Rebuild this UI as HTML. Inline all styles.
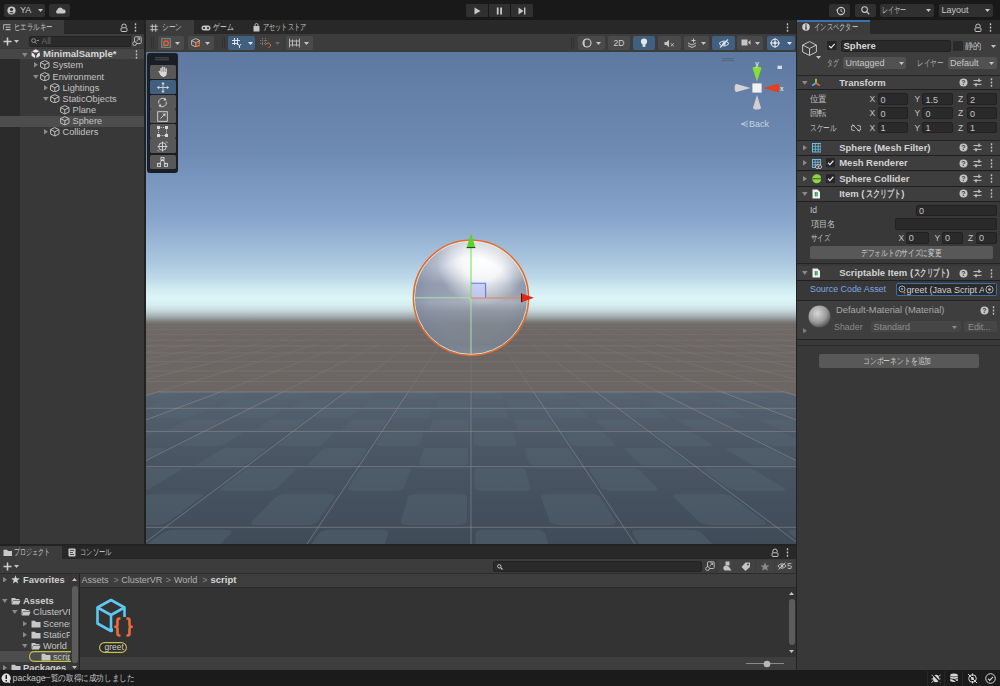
<!DOCTYPE html><html><head><meta charset="utf-8"><title>Unity</title><style>
*{box-sizing:border-box}
html,body{margin:0;padding:0;width:1000px;height:686px;overflow:hidden;background:#191919}
.a{position:absolute;display:block}
.jp{transform-origin:0 50%}
.t{font-family:"Liberation Sans",sans-serif;line-height:12px;white-space:nowrap}
</style></head><body><div class="a" style="left:0px;top:0px;width:1000px;height:20px;background:#191919;"></div>
<div class="a" style="left:0px;top:20px;width:1000px;height:650px;background:#222222;"></div>
<div class="a" style="left:4px;top:4px;width:41px;height:12.5px;background:#303030;border-radius:2px"></div>
<svg class="a" style="left:7px;top:5.5px;" width="9" height="9" viewBox="0 0 9 9"><circle cx="4.5" cy="4.5" r="4.1" fill="#c8c8c8"/><circle cx="4.5" cy="3.5" r="1.6" fill="#303030"/><path d="M1.8,7.3 Q4.5,4.6 7.2,7.3" fill="#303030"/></svg>
<div class="a t" style="left:20px;top:4.30px;font-size:9px;color:#c8c8c8;">YA</div>
<svg class="a" style="left:38px;top:9px;" width="5" height="3" viewBox="0 0 5 3"><polygon points="0,0 5,0 2.5,3" fill="#c8c8c8"/></svg>
<div class="a" style="left:49px;top:4px;width:21px;height:12.5px;background:#303030;border-radius:2px"></div>
<svg class="a" style="left:54.5px;top:6.5px;" width="11" height="7" viewBox="0 0 11 7"><path d="M2,6.5 A2,2 0 0 1 2.2,3 A3,3 0 0 1 8,2.6 A2,2 0 0 1 9.2,6.5 Z" fill="#c8c8c8"/></svg>
<div class="a" style="left:466px;top:4px;width:21.5px;height:12.5px;background:#303030;border-radius:1px"></div>
<div class="a" style="left:488.5px;top:4px;width:21.5px;height:12.5px;background:#303030;border-radius:1px"></div>
<div class="a" style="left:511px;top:4px;width:21.5px;height:12.5px;background:#303030;border-radius:1px"></div>
<svg class="a" style="left:473.5px;top:6.5px;" width="7" height="8" viewBox="0 0 7 8"><polygon points="0.5,0.5 6.5,4 0.5,7.5" fill="#c8c8c8"/></svg>
<svg class="a" style="left:496px;top:6.5px;" width="7" height="8" viewBox="0 0 7 8"><rect x="0.8" y="0.5" width="1.8" height="7" fill="#c8c8c8"/><rect x="4.2" y="0.5" width="1.8" height="7" fill="#c8c8c8"/></svg>
<svg class="a" style="left:518px;top:6.5px;" width="8" height="8" viewBox="0 0 8 8"><polygon points="0.5,0.5 5.5,4 0.5,7.5" fill="#c8c8c8"/><rect x="6" y="0.5" width="1.4" height="7" fill="#c8c8c8"/></svg>
<div class="a" style="left:829px;top:4px;width:21px;height:12.5px;background:#303030;border-radius:2px"></div>
<svg class="a" style="left:835.5px;top:5.5px;" width="10" height="10" viewBox="0 0 10 10"><circle cx="5" cy="5" r="3.6" fill="none" stroke="#c8c8c8" stroke-width="1.1"/><path d="M5,3 V5.2 L6.5,6.2" fill="none" stroke="#c8c8c8" stroke-width="0.9"/><polygon points="0,3.5 2.5,3.5 1.2,5.6" fill="#c8c8c8"/></svg>
<div class="a" style="left:854.5px;top:4px;width:21px;height:12.5px;background:#303030;border-radius:2px"></div>
<svg class="a" style="left:860.5px;top:6px;" width="9" height="9" viewBox="0 0 9 9"><circle cx="3.6" cy="3.6" r="2.8" fill="none" stroke="#c8c8c8" stroke-width="1.1"/><path d="M5.6,5.6 L8.3,8.3" stroke="#c8c8c8" stroke-width="1.3"/></svg>
<div class="a" style="left:880px;top:4px;width:54px;height:12.5px;background:#303030;border-radius:2px"></div>
<div class="a t jp" data-w="24.5" id="jp0" style="left:881.6px;top:4.30px;font-size:9.35px;color:#b8b8b8;transform:scaleX(0.6806)">レイヤー</div>
<svg class="a" style="left:926px;top:9px;" width="5" height="3" viewBox="0 0 5 3"><polygon points="0,0 5,0 2.5,3" fill="#c8c8c8"/></svg>
<div class="a" style="left:939px;top:4px;width:54px;height:12.5px;background:#303030;border-radius:2px"></div>
<div class="a t" style="left:941.5px;top:4.30px;font-size:9px;color:#c8c8c8;">Layout</div>
<svg class="a" style="left:985px;top:9px;" width="5" height="3" viewBox="0 0 5 3"><polygon points="0,0 5,0 2.5,3" fill="#c8c8c8"/></svg>
<div class="a" style="left:0px;top:20px;width:144px;height:14px;background:#282828;"></div>
<div class="a" style="left:0px;top:20px;width:64px;height:14px;background:#3c3c3c;"></div>
<svg class="a" style="left:3px;top:23.5px;" width="8" height="7" viewBox="0 0 8 7"><path d="M0.5,0.8 H7.5 M2.5,3.2 H7.5 M2.5,5.6 H7.5" stroke="#bdbdbd" stroke-width="1.1"/><path d="M0.5,0.8 V5.6" stroke="#bdbdbd" stroke-width="0.8"/></svg>
<div class="a t jp" data-w="38.5" id="jp1" style="left:13.5px;top:21.20px;font-size:9.35px;color:#c4c4c4;transform:scaleX(0.7130)">ヒエラルキー</div>
<svg class="a" style="left:119.5px;top:22.5px;" width="8" height="9" viewBox="0 0 8 9"><path d="M1.8,4.5 V3.2 A2.2,2.2 0 0 1 6.2,3.2 V4.2" fill="none" stroke="#c4c4c4" stroke-width="1"/><rect x="1" y="4.8" width="6" height="3.7" rx="1" fill="none" stroke="#c4c4c4" stroke-width="1"/></svg>
<svg class="a" style="left:133.5px;top:22.5px;" width="3" height="9" viewBox="0 0 3 9"><rect x="0.8" y="0.3" width="1.4" height="1.9" fill="#c4c4c4"/><rect x="0.8" y="3.55" width="1.4" height="1.9" fill="#c4c4c4"/><rect x="0.8" y="6.8" width="1.4" height="1.9" fill="#c4c4c4"/></svg>
<div class="a" style="left:0px;top:34px;width:144px;height:14px;background:#3c3c3c;"></div>
<svg class="a" style="left:2.5px;top:36.5px;" width="9" height="9" viewBox="0 0 9 9"><path d="M4.5,0.5 V8.5 M0.5,4.5 H8.5" stroke="#d0d0d0" stroke-width="1.5"/></svg>
<svg class="a" style="left:14px;top:39.8px;" width="5" height="3" viewBox="0 0 5 3"><polygon points="0,0 5,0 2.5,3" fill="#c4c4c4"/></svg>
<div class="a" style="left:28.5px;top:35.5px;width:102px;height:11px;background:#2a2a2a;border-radius:2px 0 0 2px;border:1px solid #232323"></div>
<svg class="a" style="left:31px;top:37.8px;" width="9" height="7" viewBox="0 0 9 7"><circle cx="2.6" cy="2.6" r="1.9" fill="none" stroke="#9a9a9a" stroke-width="0.9"/><path d="M3.8,3.9 L5.6,5.8 M5.5,2.6 H8" stroke="#9a9a9a" stroke-width="0.9"/></svg>
<div class="a t" style="left:41.5px;top:35.20px;font-size:8.5px;color:#6a6a6a;">All</div>
<svg class="a" style="left:131.5px;top:36.2px;" width="10" height="10" viewBox="0 0 10 10"><rect x="2.5" y="0.8" width="6.7" height="6.7" rx="0.8" fill="none" stroke="#c4c4c4" stroke-width="0.9"/><path d="M4.5,5.2 L7.5,2.2 M5.5,2 H7.6 V4" stroke="#c4c4c4" stroke-width="0.9" fill="none"/><circle cx="2.6" cy="7.6" r="1.9" fill="#3c3c3c" stroke="#c4c4c4" stroke-width="0.9"/></svg>
<div class="a" style="left:0px;top:48px;width:144px;height:496px;background:#383838;"></div>
<div class="a" style="left:0px;top:59px;width:19.5px;height:485px;background:#2b2b2b;"></div>
<div class="a" style="left:0px;top:48.5px;width:144px;height:10.8px;background:#464646;"></div>
<svg class="a" style="left:22px;top:52.5px;" width="5.5" height="4" viewBox="0 0 5.5 4"><polygon points="0,0 5.5,0 2.75,4" fill="#8a8a8a"/></svg>
<svg class="a" style="left:30.5px;top:49.3px;" width="9.5" height="9.5" viewBox="0 0 9.5 9.5"><path d="M4.75,0.3 L8.9,2.6 V7 L4.75,9.2 L0.6,7 V2.6 Z" fill="#e8e8e8"/><path d="M4.75,4.9 V9.2 M4.75,4.9 L0.6,2.6 M4.75,4.9 L8.9,2.6" stroke="#464646" stroke-width="1.3"/><circle cx="4.75" cy="4.9" r="1.5" fill="#464646"/></svg>
<div class="a t" style="left:43px;top:48.20px;font-size:9.6px;color:#d6d6d6;font-weight:bold;">MinimalSample*</div>
<svg class="a" style="left:134.5px;top:49.8px;" width="3" height="9" viewBox="0 0 3 9"><rect x="0.8" y="0.3" width="1.4" height="1.9" fill="#c4c4c4"/><rect x="0.8" y="3.55" width="1.4" height="1.9" fill="#c4c4c4"/><rect x="0.8" y="6.8" width="1.4" height="1.9" fill="#c4c4c4"/></svg>
<div class="a" style="left:0px;top:115.8px;width:144px;height:11px;background:#4d4d4d;"></div>
<svg class="a" style="left:34px;top:62.400000000000006px;" width="4" height="5.6" viewBox="0 0 4 5.6"><polygon points="0,0 4,2.8 0,5.6" fill="#8a8a8a"/></svg>
<svg class="a" style="left:40px;top:60.400000000000006px;" width="9.6" height="9.6" viewBox="0 0 9.6 9.6"><path d="M4.8,0.6 L9.0,2.592 L9.0,7.008 L4.8,9.0 L0.6,7.008 L0.6,2.592 Z M0.6,2.592 L4.8,4.8 L9.0,2.592 M4.8,4.8 L4.8,9.0" fill="none" stroke="#c4c4c4" stroke-width="0.95" stroke-linejoin="round"/></svg>
<div class="a t" style="left:52.5px;top:59.40px;font-size:9.2px;color:#c4c4c4;">System</div>
<svg class="a" style="left:33px;top:74.5px;" width="5.6" height="4" viewBox="0 0 5.6 4"><polygon points="0,0 5.6,0 2.8,4" fill="#8a8a8a"/></svg>
<svg class="a" style="left:40px;top:71.5px;" width="9.6" height="9.6" viewBox="0 0 9.6 9.6"><path d="M4.8,0.6 L9.0,2.592 L9.0,7.008 L4.8,9.0 L0.6,7.008 L0.6,2.592 Z M0.6,2.592 L4.8,4.8 L9.0,2.592 M4.8,4.8 L4.8,9.0" fill="none" stroke="#c4c4c4" stroke-width="0.95" stroke-linejoin="round"/></svg>
<div class="a t" style="left:52.5px;top:70.50px;font-size:9.2px;color:#c4c4c4;">Environment</div>
<svg class="a" style="left:44px;top:84.7px;" width="4" height="5.6" viewBox="0 0 4 5.6"><polygon points="0,0 4,2.8 0,5.6" fill="#8a8a8a"/></svg>
<svg class="a" style="left:50px;top:82.7px;" width="9.6" height="9.6" viewBox="0 0 9.6 9.6"><path d="M4.8,0.6 L9.0,2.592 L9.0,7.008 L4.8,9.0 L0.6,7.008 L0.6,2.592 Z M0.6,2.592 L4.8,4.8 L9.0,2.592 M4.8,4.8 L4.8,9.0" fill="none" stroke="#c4c4c4" stroke-width="0.95" stroke-linejoin="round"/></svg>
<div class="a t" style="left:62.5px;top:81.70px;font-size:9.2px;color:#c4c4c4;">Lightings</div>
<svg class="a" style="left:43px;top:96.8px;" width="5.6" height="4" viewBox="0 0 5.6 4"><polygon points="0,0 5.6,0 2.8,4" fill="#8a8a8a"/></svg>
<svg class="a" style="left:50px;top:93.8px;" width="9.6" height="9.6" viewBox="0 0 9.6 9.6"><path d="M4.8,0.6 L9.0,2.592 L9.0,7.008 L4.8,9.0 L0.6,7.008 L0.6,2.592 Z M0.6,2.592 L4.8,4.8 L9.0,2.592 M4.8,4.8 L4.8,9.0" fill="none" stroke="#c4c4c4" stroke-width="0.95" stroke-linejoin="round"/></svg>
<div class="a t" style="left:62.5px;top:92.80px;font-size:9.2px;color:#c4c4c4;">StaticObjects</div>
<svg class="a" style="left:60px;top:105.0px;" width="9.6" height="9.6" viewBox="0 0 9.6 9.6"><path d="M4.8,0.6 L9.0,2.592 L9.0,7.008 L4.8,9.0 L0.6,7.008 L0.6,2.592 Z M0.6,2.592 L4.8,4.8 L9.0,2.592 M4.8,4.8 L4.8,9.0" fill="none" stroke="#c4c4c4" stroke-width="0.95" stroke-linejoin="round"/></svg>
<div class="a t" style="left:72.5px;top:104.00px;font-size:9.2px;color:#c4c4c4;">Plane</div>
<svg class="a" style="left:60px;top:116.2px;" width="9.6" height="9.6" viewBox="0 0 9.6 9.6"><path d="M4.8,0.6 L9.0,2.592 L9.0,7.008 L4.8,9.0 L0.6,7.008 L0.6,2.592 Z M0.6,2.592 L4.8,4.8 L9.0,2.592 M4.8,4.8 L4.8,9.0" fill="none" stroke="#c4c4c4" stroke-width="0.95" stroke-linejoin="round"/></svg>
<div class="a t" style="left:72.5px;top:115.20px;font-size:9.2px;color:#c4c4c4;">Sphere</div>
<svg class="a" style="left:44px;top:129.29999999999998px;" width="4" height="5.6" viewBox="0 0 4 5.6"><polygon points="0,0 4,2.8 0,5.6" fill="#8a8a8a"/></svg>
<svg class="a" style="left:50px;top:127.3px;" width="9.6" height="9.6" viewBox="0 0 9.6 9.6"><path d="M4.8,0.6 L9.0,2.592 L9.0,7.008 L4.8,9.0 L0.6,7.008 L0.6,2.592 Z M0.6,2.592 L4.8,4.8 L9.0,2.592 M4.8,4.8 L4.8,9.0" fill="none" stroke="#c4c4c4" stroke-width="0.95" stroke-linejoin="round"/></svg>
<div class="a t" style="left:62.5px;top:126.30px;font-size:9.2px;color:#c4c4c4;">Colliders</div>
<div class="a" style="left:146px;top:20px;width:650px;height:14px;background:#282828;"></div>
<div class="a" style="left:146px;top:20px;width:48px;height:14px;background:#3c3c3c;"></div>
<svg class="a" style="left:150px;top:23.5px;" width="8" height="8" viewBox="0 0 8 8"><path d="M2.3,0.3 V7.7 M5.7,0.3 V7.7 M0.3,2.3 H7.7 M0.3,5.7 H7.7" stroke="#c4c4c4" stroke-width="1"/></svg>
<div class="a t jp" data-w="20.2" id="jp2" style="left:162.4px;top:21.20px;font-size:9.35px;color:#c4c4c4;transform:scaleX(0.7481)">シーン</div>
<svg class="a" style="left:201px;top:24.5px;" width="10" height="6" viewBox="0 0 10 6"><rect x="0.5" y="0.5" width="9" height="5" rx="2.5" fill="#c4c4c4"/><circle cx="3" cy="3" r="1.1" fill="#282828"/><circle cx="7" cy="3" r="1.1" fill="#282828"/></svg>
<div class="a t jp" data-w="20.4" id="jp3" style="left:213px;top:21.20px;font-size:9.35px;color:#c4c4c4;transform:scaleX(0.7556)">ゲーム</div>
<svg class="a" style="left:252.5px;top:22.8px;" width="7" height="9" viewBox="0 0 7 9"><path d="M2,3 V2 A1.5,1.5 0 0 1 5,2 V3" fill="none" stroke="#c4c4c4" stroke-width="0.9"/><rect x="0.5" y="3" width="6" height="5.5" rx="0.6" fill="#c4c4c4"/></svg>
<div class="a t jp" data-w="43" id="jp4" style="left:262.6px;top:21.20px;font-size:9.35px;color:#c4c4c4;transform:scaleX(0.6825)">アセットストア</div>
<svg class="a" style="left:785.5px;top:22.5px;" width="3" height="9" viewBox="0 0 3 9"><rect x="0.8" y="0.3" width="1.4" height="1.9" fill="#c4c4c4"/><rect x="0.8" y="3.55" width="1.4" height="1.9" fill="#c4c4c4"/><rect x="0.8" y="6.8" width="1.4" height="1.9" fill="#c4c4c4"/></svg>
<div class="a" style="left:146px;top:34px;width:650px;height:17.5px;background:#3c3c3c;"></div>
<svg class="a" style="left:151px;top:37px;" width="3" height="12" viewBox="0 0 3 12"><path d="M0.5,0 V12 M2.5,0 V12" stroke="#2e2e2e" stroke-width="0.8"/></svg>
<svg class="a" style="left:221.5px;top:37px;" width="3" height="12" viewBox="0 0 3 12"><path d="M0.5,0 V12 M2.5,0 V12" stroke="#2e2e2e" stroke-width="0.8"/></svg>
<svg class="a" style="left:570.5px;top:37px;" width="3" height="12" viewBox="0 0 3 12"><path d="M0.5,0 V12 M2.5,0 V12" stroke="#2e2e2e" stroke-width="0.8"/></svg>
<div class="a" style="left:157.5px;top:35.8px;width:26.5px;height:13.8px;background:#4a4a4a;border-radius:2px"></div>
<svg class="a" style="left:160.5px;top:37.6px;" width="10" height="10" viewBox="0 0 10 10"><rect x="0.6" y="0.6" width="8.8" height="8.8" fill="#5a5a5a" stroke="#8a8a8a" stroke-width="0.8"/><circle cx="5" cy="5.2" r="2.3" fill="none" stroke="#f06020" stroke-width="1.1"/><path d="M1.5,8.5 L3,7" stroke="#4a8ae0" stroke-width="0.8"/></svg>
<svg class="a" style="left:174.5px;top:41.5px;" width="5" height="3" viewBox="0 0 5 3"><polygon points="0,0 5,0 2.5,3" fill="#c4c4c4"/></svg>
<div class="a" style="left:187.5px;top:35.8px;width:26.5px;height:13.8px;background:#4a4a4a;border-radius:2px"></div>
<svg class="a" style="left:190.5px;top:37.5px;" width="9.5" height="9.5" viewBox="0 0 9.5 9.5"><path d="M4.75,0.6 L8.9,2.5650000000000004 L8.9,6.935 L4.75,8.9 L0.6,6.935 L0.6,2.5650000000000004 Z M0.6,2.5650000000000004 L4.75,4.75 L8.9,2.5650000000000004 M4.75,4.75 L4.75,8.9" fill="none" stroke="#c4c4c4" stroke-width="0.9" stroke-linejoin="round"/></svg>
<svg class="a" style="left:195px;top:42px;" width="5" height="5" viewBox="0 0 5 5"><circle cx="2.5" cy="2.5" r="1.8" fill="none" stroke="#f06020" stroke-width="1.1"/></svg>
<svg class="a" style="left:204.5px;top:41.5px;" width="5" height="3" viewBox="0 0 5 3"><polygon points="0,0 5,0 2.5,3" fill="#c4c4c4"/></svg>
<div class="a" style="left:228px;top:35.8px;width:16.5px;height:13.8px;background:#41607f;border-radius:2px 0 0 2px"></div>
<div class="a" style="left:245px;top:35.8px;width:9.5px;height:13.8px;background:#41607f;border-radius:0 2px 2px 0"></div>
<svg class="a" style="left:231.5px;top:38px;" width="10" height="10" viewBox="0 0 10 10"><path d="M2.5,0 V7 M5.5,0 V7 M0,2.5 H8 M0,5.5 H6" stroke="#dce4ee" stroke-width="1"/><path d="M6,6 L7.5,8 L9,6 M7.5,8 V10" stroke="#dce4ee" stroke-width="1" fill="none"/></svg>
<svg class="a" style="left:247.5px;top:41.5px;" width="5" height="3" viewBox="0 0 5 3"><polygon points="0,0 5,0 2.5,3" fill="#dce4ee"/></svg>
<div class="a" style="left:256.8px;top:35.8px;width:26.6px;height:13.8px;background:#3f3f3f;border-radius:2px"></div>
<svg class="a" style="left:260px;top:38px;" width="11" height="10" viewBox="0 0 11 10"><path d="M2.5,0 V8 M5.5,0 V8 M0,2.5 H8 M0,5.5 H8" stroke="#7a7a7a" stroke-width="0.9" stroke-dasharray="1.2 0.8"/><path d="M6.5,6 A2.2,2.2 0 1 1 8.5,9.5" stroke="#e0703a" stroke-width="1" fill="none"/></svg>
<svg class="a" style="left:274.5px;top:41.5px;" width="5" height="3" viewBox="0 0 5 3"><polygon points="0,0 5,0 2.5,3" fill="#6a6a6a"/></svg>
<div class="a" style="left:285.6px;top:35.8px;width:27.2px;height:13.8px;background:#4a4a4a;border-radius:2px"></div>
<svg class="a" style="left:289px;top:38px;" width="11" height="10" viewBox="0 0 11 10"><path d="M0.5,0.5 V9.5 M10.5,0.5 V9.5 M0.5,3 H10.5 M0.5,7 H10.5 M3.5,1.5 V8.5 M7.5,1.5 V8.5" stroke="#bcbcbc" stroke-width="0.9"/></svg>
<svg class="a" style="left:303.5px;top:41.5px;" width="5" height="3" viewBox="0 0 5 3"><polygon points="0,0 5,0 2.5,3" fill="#c4c4c4"/></svg>
<div class="a" style="left:578px;top:35.5px;width:27px;height:14.2px;background:#4a4a4a;border-radius:2px"></div>
<svg class="a" style="left:581.5px;top:38px;" width="10" height="10" viewBox="0 0 10 10"><circle cx="5" cy="5" r="4" fill="none" stroke="#d0d0d0" stroke-width="1.1"/><path d="M5,1 A4,4 0 0 0 5,9 A2.5,4 0 0 1 5,1" fill="#d0d0d0"/></svg>
<svg class="a" style="left:596px;top:41.5px;" width="5" height="3" viewBox="0 0 5 3"><polygon points="0,0 5,0 2.5,3" fill="#c4c4c4"/></svg>
<div class="a" style="left:608px;top:35.5px;width:22px;height:14.2px;background:#4a4a4a;border-radius:2px"></div>
<div class="a t" style="left:613.5px;top:36.60px;font-size:8.5px;color:#d0d0d0;">2D</div>
<div class="a" style="left:633.3px;top:35.5px;width:21.7px;height:14.2px;background:#41607f;border-radius:2px"></div>
<svg class="a" style="left:640px;top:37.5px;" width="8" height="10" viewBox="0 0 8 10"><circle cx="4" cy="3.6" r="3.1" fill="#e6e6e6"/><rect x="2.6" y="6.2" width="2.8" height="2.6" fill="#e6e6e6"/></svg>
<div class="a" style="left:658px;top:35.5px;width:22.5px;height:14.2px;background:#4a4a4a;border-radius:2px"></div>
<svg class="a" style="left:664px;top:38.5px;" width="11" height="9" viewBox="0 0 11 9"><path d="M0.5,3 H2.5 L5,0.8 V8.2 L2.5,6 H0.5 Z" fill="#c4c4c4"/><path d="M6.8,4.2 L9.8,7.4 M9.8,4.2 L6.8,7.4" stroke="#c4c4c4" stroke-width="0.9"/></svg>
<div class="a" style="left:683.7px;top:35.5px;width:25.5px;height:14.2px;background:#4a4a4a;border-radius:2px"></div>
<svg class="a" style="left:686.5px;top:38px;" width="11" height="10" viewBox="0 0 11 10"><path d="M1,5 L5,7 L9,5 M1,7.5 L5,9.5 L9,7.5" fill="none" stroke="#c4c4c4" stroke-width="1"/><path d="M6.5,0.5 V4.5 M4.5,2.5 H8.5" stroke="#c4c4c4" stroke-width="1"/></svg>
<svg class="a" style="left:701px;top:41.5px;" width="5" height="3" viewBox="0 0 5 3"><polygon points="0,0 5,0 2.5,3" fill="#c4c4c4"/></svg>
<div class="a" style="left:712px;top:35.5px;width:22.5px;height:14.2px;background:#41607f;border-radius:2px"></div>
<svg class="a" style="left:717.5px;top:38.5px;" width="12" height="9" viewBox="0 0 12 9"><path d="M1,4.5 Q6,-0.5 11,4.5 Q6,9.5 1,4.5 Z" fill="none" stroke="#e0e6ee" stroke-width="1"/><circle cx="6" cy="4.5" r="1.6" fill="#e0e6ee"/><path d="M2,8.5 L10,0.5" stroke="#e0e6ee" stroke-width="1.1"/></svg>
<div class="a" style="left:737.3px;top:35.5px;width:26px;height:14.2px;background:#4a4a4a;border-radius:2px"></div>
<svg class="a" style="left:741px;top:39px;" width="10" height="7" viewBox="0 0 10 7"><rect x="0.5" y="0.5" width="6" height="6" fill="#c4c4c4"/><polygon points="7,3.5 9.5,1 9.5,6" fill="#c4c4c4"/></svg>
<svg class="a" style="left:755px;top:41.5px;" width="5" height="3" viewBox="0 0 5 3"><polygon points="0,0 5,0 2.5,3" fill="#c4c4c4"/></svg>
<div class="a" style="left:766.5px;top:35.5px;width:16px;height:14.2px;background:#41607f;border-radius:2px 0 0 2px"></div>
<div class="a" style="left:783.2px;top:35.5px;width:11.4px;height:14.2px;background:#41607f;border-radius:0 2px 2px 0"></div>
<svg class="a" style="left:769.5px;top:37.5px;" width="10" height="10" viewBox="0 0 10 10"><circle cx="5" cy="5" r="3.8" fill="none" stroke="#e6e6e6" stroke-width="1.1"/><path d="M5,0 V10 M0,5 H10" stroke="#e6e6e6" stroke-width="1"/><circle cx="5" cy="5" r="1.4" fill="#e6e6e6"/></svg>
<svg class="a" style="left:786.5px;top:41.5px;" width="5" height="3" viewBox="0 0 5 3"><polygon points="0,0 5,0 2.5,3" fill="#e6e6e6"/></svg>
<div class="a" style="left:146px;top:52px;width:650px;height:492px;overflow:hidden"><svg width="650" height="492" viewBox="0 0 650 492" style="position:absolute;left:0;top:0;display:block">
<defs>
<linearGradient id="sky" x1="0" y1="0" x2="0" y2="1" gradientUnits="objectBoundingBox">
<stop offset="0.0000" stop-color="#5e79a0"/>
<stop offset="0.1992" stop-color="#6d8ab3"/>
<stop offset="0.3415" stop-color="#88a6cc"/>
<stop offset="0.4228" stop-color="#a9c5de"/>
<stop offset="0.4583" stop-color="#bcd8e8"/>
<stop offset="0.4817" stop-color="#d0ecf2"/>
<stop offset="0.5000" stop-color="#dbf5f8"/>
<stop offset="0.5142" stop-color="#d6eef0"/>
<stop offset="0.5244" stop-color="#c8dade"/>
<stop offset="0.5325" stop-color="#b2c0c2"/>
<stop offset="0.5407" stop-color="#98a0a2"/>
<stop offset="0.5478" stop-color="#7e7c7b"/>
<stop offset="0.5539" stop-color="#6f6a68"/>
<stop offset="0.5854" stop-color="#6c6765"/>
<stop offset="1.0020" stop-color="#6b6664"/>
</linearGradient>
<linearGradient id="floorShade" x1="0" y1="0" x2="0" y2="1">
<stop offset="0" stop-color="#56626f"/>
<stop offset="0.35" stop-color="#4b5765"/>
<stop offset="1" stop-color="#404b58"/>
</linearGradient>
<linearGradient id="sphV" x1="0" y1="0" x2="0" y2="1"><stop offset="0.000" stop-color="#e0e6f0"/><stop offset="0.216" stop-color="#d0d6e4"/><stop offset="0.381" stop-color="#9aa3b5"/><stop offset="0.476" stop-color="#9ea6b6"/><stop offset="0.537" stop-color="#aab2be"/><stop offset="0.615" stop-color="#9198a4"/><stop offset="0.727" stop-color="#80878f"/><stop offset="0.909" stop-color="#7c828c"/><stop offset="1.004" stop-color="#8c919a"/></linearGradient><linearGradient id="sphL" x1="0" y1="0" x2="1" y2="0"><stop offset="0" stop-color="#7f8ba4" stop-opacity="0.4"/><stop offset="0.55" stop-color="#7f8ba4" stop-opacity="0"/></linearGradient><radialGradient id="sphHi" cx="0.6" cy="0.17" r="0.4"><stop offset="0" stop-color="#ffffff" stop-opacity="1"/><stop offset="0.45" stop-color="#ffffff" stop-opacity="0.85"/><stop offset="1" stop-color="#ffffff" stop-opacity="0"/></radialGradient><radialGradient id="sphEdge" cx="0.5" cy="0.5" r="0.5"><stop offset="0" stop-color="#6a7288" stop-opacity="0"/><stop offset="0.7" stop-color="#6a7288" stop-opacity="0"/><stop offset="1" stop-color="#6a7288" stop-opacity="0.25"/></radialGradient>
<clipPath id="sphClip"><circle cx="325.00" cy="245.80" r="57.5"/></clipPath>
</defs>
<rect x="0" y="0" width="650" height="492" fill="url(#sky)"/>
<g><line x1="0" y1="329.60" x2="650" y2="329.60" stroke="#a8a098" stroke-opacity="0.22" stroke-width="0.8"/><line x1="0" y1="319.10" x2="650" y2="319.10" stroke="#a8a098" stroke-opacity="0.22" stroke-width="0.8"/><line x1="0" y1="309.70" x2="650" y2="309.70" stroke="#a8a098" stroke-opacity="0.22" stroke-width="0.8"/><line x1="0" y1="301.00" x2="650" y2="301.00" stroke="#a8a098" stroke-opacity="0.22" stroke-width="0.8"/><line x1="0" y1="294.00" x2="650" y2="294.00" stroke="#a8a098" stroke-opacity="0.22" stroke-width="0.8"/><line x1="0" y1="288.20" x2="650" y2="288.20" stroke="#a8a098" stroke-opacity="0.22" stroke-width="0.8"/><line x1="0" y1="282.30" x2="650" y2="282.30" stroke="#a8a098" stroke-opacity="0.14" stroke-width="0.8"/><line x1="0" y1="277.70" x2="650" y2="277.70" stroke="#a8a098" stroke-opacity="0.14" stroke-width="0.8"/><line x1="0" y1="274.00" x2="650" y2="274.00" stroke="#a8a098" stroke-opacity="0.14" stroke-width="0.8"/><line x1="-677.95" y1="340.03" x2="-370.30" y2="311.18" stroke="#a8a098" stroke-opacity="0.22" stroke-width="0.8"/><line x1="-370.30" y1="311.18" x2="-168.47" y2="292.26" stroke="#a8a098" stroke-opacity="0.15" stroke-width="0.8"/><line x1="-168.47" y1="292.26" x2="12.79" y2="275.27" stroke="#a8a098" stroke-opacity="0.08" stroke-width="0.8"/><line x1="-615.27" y1="340.03" x2="-326.84" y2="311.18" stroke="#a8a098" stroke-opacity="0.22" stroke-width="0.8"/><line x1="-326.84" y1="311.18" x2="-137.63" y2="292.26" stroke="#a8a098" stroke-opacity="0.15" stroke-width="0.8"/><line x1="-137.63" y1="292.26" x2="32.30" y2="275.27" stroke="#a8a098" stroke-opacity="0.08" stroke-width="0.8"/><line x1="-552.58" y1="340.03" x2="-283.38" y2="311.18" stroke="#a8a098" stroke-opacity="0.22" stroke-width="0.8"/><line x1="-283.38" y1="311.18" x2="-106.79" y2="292.26" stroke="#a8a098" stroke-opacity="0.15" stroke-width="0.8"/><line x1="-106.79" y1="292.26" x2="51.81" y2="275.27" stroke="#a8a098" stroke-opacity="0.08" stroke-width="0.8"/><line x1="-489.90" y1="340.03" x2="-239.93" y2="311.18" stroke="#a8a098" stroke-opacity="0.22" stroke-width="0.8"/><line x1="-239.93" y1="311.18" x2="-75.94" y2="292.26" stroke="#a8a098" stroke-opacity="0.15" stroke-width="0.8"/><line x1="-75.94" y1="292.26" x2="71.33" y2="275.27" stroke="#a8a098" stroke-opacity="0.08" stroke-width="0.8"/><line x1="-427.21" y1="340.03" x2="-196.47" y2="311.18" stroke="#a8a098" stroke-opacity="0.22" stroke-width="0.8"/><line x1="-196.47" y1="311.18" x2="-45.10" y2="292.26" stroke="#a8a098" stroke-opacity="0.15" stroke-width="0.8"/><line x1="-45.10" y1="292.26" x2="90.84" y2="275.27" stroke="#a8a098" stroke-opacity="0.08" stroke-width="0.8"/><line x1="-364.53" y1="340.03" x2="-153.02" y2="311.18" stroke="#a8a098" stroke-opacity="0.22" stroke-width="0.8"/><line x1="-153.02" y1="311.18" x2="-14.26" y2="292.26" stroke="#a8a098" stroke-opacity="0.15" stroke-width="0.8"/><line x1="-14.26" y1="292.26" x2="110.35" y2="275.27" stroke="#a8a098" stroke-opacity="0.08" stroke-width="0.8"/><line x1="-301.84" y1="340.03" x2="-109.56" y2="311.18" stroke="#a8a098" stroke-opacity="0.22" stroke-width="0.8"/><line x1="-109.56" y1="311.18" x2="16.58" y2="292.26" stroke="#a8a098" stroke-opacity="0.15" stroke-width="0.8"/><line x1="16.58" y1="292.26" x2="129.87" y2="275.27" stroke="#a8a098" stroke-opacity="0.08" stroke-width="0.8"/><line x1="-239.16" y1="340.03" x2="-66.10" y2="311.18" stroke="#a8a098" stroke-opacity="0.22" stroke-width="0.8"/><line x1="-66.10" y1="311.18" x2="47.42" y2="292.26" stroke="#a8a098" stroke-opacity="0.15" stroke-width="0.8"/><line x1="47.42" y1="292.26" x2="149.38" y2="275.27" stroke="#a8a098" stroke-opacity="0.08" stroke-width="0.8"/><line x1="-176.47" y1="340.03" x2="-22.65" y2="311.18" stroke="#a8a098" stroke-opacity="0.22" stroke-width="0.8"/><line x1="-22.65" y1="311.18" x2="78.27" y2="292.26" stroke="#a8a098" stroke-opacity="0.15" stroke-width="0.8"/><line x1="78.27" y1="292.26" x2="168.89" y2="275.27" stroke="#a8a098" stroke-opacity="0.08" stroke-width="0.8"/><line x1="-113.79" y1="340.03" x2="20.81" y2="311.18" stroke="#a8a098" stroke-opacity="0.22" stroke-width="0.8"/><line x1="20.81" y1="311.18" x2="109.11" y2="292.26" stroke="#a8a098" stroke-opacity="0.15" stroke-width="0.8"/><line x1="109.11" y1="292.26" x2="188.41" y2="275.27" stroke="#a8a098" stroke-opacity="0.08" stroke-width="0.8"/><line x1="-51.11" y1="340.03" x2="64.26" y2="311.18" stroke="#a8a098" stroke-opacity="0.22" stroke-width="0.8"/><line x1="64.26" y1="311.18" x2="139.95" y2="292.26" stroke="#a8a098" stroke-opacity="0.15" stroke-width="0.8"/><line x1="139.95" y1="292.26" x2="207.92" y2="275.27" stroke="#a8a098" stroke-opacity="0.08" stroke-width="0.8"/><line x1="11.58" y1="340.03" x2="107.72" y2="311.18" stroke="#a8a098" stroke-opacity="0.22" stroke-width="0.8"/><line x1="107.72" y1="311.18" x2="170.79" y2="292.26" stroke="#a8a098" stroke-opacity="0.15" stroke-width="0.8"/><line x1="170.79" y1="292.26" x2="227.43" y2="275.27" stroke="#a8a098" stroke-opacity="0.08" stroke-width="0.8"/><line x1="74.26" y1="340.03" x2="151.18" y2="311.18" stroke="#a8a098" stroke-opacity="0.22" stroke-width="0.8"/><line x1="151.18" y1="311.18" x2="201.63" y2="292.26" stroke="#a8a098" stroke-opacity="0.15" stroke-width="0.8"/><line x1="201.63" y1="292.26" x2="246.95" y2="275.27" stroke="#a8a098" stroke-opacity="0.08" stroke-width="0.8"/><line x1="136.95" y1="340.03" x2="194.63" y2="311.18" stroke="#a8a098" stroke-opacity="0.22" stroke-width="0.8"/><line x1="194.63" y1="311.18" x2="232.47" y2="292.26" stroke="#a8a098" stroke-opacity="0.15" stroke-width="0.8"/><line x1="232.47" y1="292.26" x2="266.46" y2="275.27" stroke="#a8a098" stroke-opacity="0.08" stroke-width="0.8"/><line x1="199.63" y1="340.03" x2="238.09" y2="311.18" stroke="#a8a098" stroke-opacity="0.22" stroke-width="0.8"/><line x1="238.09" y1="311.18" x2="263.32" y2="292.26" stroke="#a8a098" stroke-opacity="0.15" stroke-width="0.8"/><line x1="263.32" y1="292.26" x2="285.97" y2="275.27" stroke="#a8a098" stroke-opacity="0.08" stroke-width="0.8"/><line x1="262.32" y1="340.03" x2="281.54" y2="311.18" stroke="#a8a098" stroke-opacity="0.22" stroke-width="0.8"/><line x1="281.54" y1="311.18" x2="294.16" y2="292.26" stroke="#a8a098" stroke-opacity="0.15" stroke-width="0.8"/><line x1="294.16" y1="292.26" x2="305.49" y2="275.27" stroke="#a8a098" stroke-opacity="0.08" stroke-width="0.8"/><line x1="325.00" y1="340.03" x2="325.00" y2="311.18" stroke="#a8a098" stroke-opacity="0.22" stroke-width="0.8"/><line x1="325.00" y1="311.18" x2="325.00" y2="292.26" stroke="#a8a098" stroke-opacity="0.15" stroke-width="0.8"/><line x1="325.00" y1="292.26" x2="325.00" y2="275.27" stroke="#a8a098" stroke-opacity="0.08" stroke-width="0.8"/><line x1="387.68" y1="340.03" x2="368.46" y2="311.18" stroke="#a8a098" stroke-opacity="0.22" stroke-width="0.8"/><line x1="368.46" y1="311.18" x2="355.84" y2="292.26" stroke="#a8a098" stroke-opacity="0.15" stroke-width="0.8"/><line x1="355.84" y1="292.26" x2="344.51" y2="275.27" stroke="#a8a098" stroke-opacity="0.08" stroke-width="0.8"/><line x1="450.37" y1="340.03" x2="411.91" y2="311.18" stroke="#a8a098" stroke-opacity="0.22" stroke-width="0.8"/><line x1="411.91" y1="311.18" x2="386.68" y2="292.26" stroke="#a8a098" stroke-opacity="0.15" stroke-width="0.8"/><line x1="386.68" y1="292.26" x2="364.03" y2="275.27" stroke="#a8a098" stroke-opacity="0.08" stroke-width="0.8"/><line x1="513.05" y1="340.03" x2="455.37" y2="311.18" stroke="#a8a098" stroke-opacity="0.22" stroke-width="0.8"/><line x1="455.37" y1="311.18" x2="417.53" y2="292.26" stroke="#a8a098" stroke-opacity="0.15" stroke-width="0.8"/><line x1="417.53" y1="292.26" x2="383.54" y2="275.27" stroke="#a8a098" stroke-opacity="0.08" stroke-width="0.8"/><line x1="575.74" y1="340.03" x2="498.82" y2="311.18" stroke="#a8a098" stroke-opacity="0.22" stroke-width="0.8"/><line x1="498.82" y1="311.18" x2="448.37" y2="292.26" stroke="#a8a098" stroke-opacity="0.15" stroke-width="0.8"/><line x1="448.37" y1="292.26" x2="403.05" y2="275.27" stroke="#a8a098" stroke-opacity="0.08" stroke-width="0.8"/><line x1="638.42" y1="340.03" x2="542.28" y2="311.18" stroke="#a8a098" stroke-opacity="0.22" stroke-width="0.8"/><line x1="542.28" y1="311.18" x2="479.21" y2="292.26" stroke="#a8a098" stroke-opacity="0.15" stroke-width="0.8"/><line x1="479.21" y1="292.26" x2="422.57" y2="275.27" stroke="#a8a098" stroke-opacity="0.08" stroke-width="0.8"/><line x1="701.11" y1="340.03" x2="585.74" y2="311.18" stroke="#a8a098" stroke-opacity="0.22" stroke-width="0.8"/><line x1="585.74" y1="311.18" x2="510.05" y2="292.26" stroke="#a8a098" stroke-opacity="0.15" stroke-width="0.8"/><line x1="510.05" y1="292.26" x2="442.08" y2="275.27" stroke="#a8a098" stroke-opacity="0.08" stroke-width="0.8"/><line x1="763.79" y1="340.03" x2="629.19" y2="311.18" stroke="#a8a098" stroke-opacity="0.22" stroke-width="0.8"/><line x1="629.19" y1="311.18" x2="540.89" y2="292.26" stroke="#a8a098" stroke-opacity="0.15" stroke-width="0.8"/><line x1="540.89" y1="292.26" x2="461.59" y2="275.27" stroke="#a8a098" stroke-opacity="0.08" stroke-width="0.8"/><line x1="826.47" y1="340.03" x2="672.65" y2="311.18" stroke="#a8a098" stroke-opacity="0.22" stroke-width="0.8"/><line x1="672.65" y1="311.18" x2="571.73" y2="292.26" stroke="#a8a098" stroke-opacity="0.15" stroke-width="0.8"/><line x1="571.73" y1="292.26" x2="481.11" y2="275.27" stroke="#a8a098" stroke-opacity="0.08" stroke-width="0.8"/><line x1="889.16" y1="340.03" x2="716.10" y2="311.18" stroke="#a8a098" stroke-opacity="0.22" stroke-width="0.8"/><line x1="716.10" y1="311.18" x2="602.58" y2="292.26" stroke="#a8a098" stroke-opacity="0.15" stroke-width="0.8"/><line x1="602.58" y1="292.26" x2="500.62" y2="275.27" stroke="#a8a098" stroke-opacity="0.08" stroke-width="0.8"/><line x1="951.84" y1="340.03" x2="759.56" y2="311.18" stroke="#a8a098" stroke-opacity="0.22" stroke-width="0.8"/><line x1="759.56" y1="311.18" x2="633.42" y2="292.26" stroke="#a8a098" stroke-opacity="0.15" stroke-width="0.8"/><line x1="633.42" y1="292.26" x2="520.13" y2="275.27" stroke="#a8a098" stroke-opacity="0.08" stroke-width="0.8"/><line x1="1014.53" y1="340.03" x2="803.02" y2="311.18" stroke="#a8a098" stroke-opacity="0.22" stroke-width="0.8"/><line x1="803.02" y1="311.18" x2="664.26" y2="292.26" stroke="#a8a098" stroke-opacity="0.15" stroke-width="0.8"/><line x1="664.26" y1="292.26" x2="539.65" y2="275.27" stroke="#a8a098" stroke-opacity="0.08" stroke-width="0.8"/><line x1="1077.21" y1="340.03" x2="846.47" y2="311.18" stroke="#a8a098" stroke-opacity="0.22" stroke-width="0.8"/><line x1="846.47" y1="311.18" x2="695.10" y2="292.26" stroke="#a8a098" stroke-opacity="0.15" stroke-width="0.8"/><line x1="695.10" y1="292.26" x2="559.16" y2="275.27" stroke="#a8a098" stroke-opacity="0.08" stroke-width="0.8"/><line x1="1139.90" y1="340.03" x2="889.93" y2="311.18" stroke="#a8a098" stroke-opacity="0.22" stroke-width="0.8"/><line x1="889.93" y1="311.18" x2="725.94" y2="292.26" stroke="#a8a098" stroke-opacity="0.15" stroke-width="0.8"/><line x1="725.94" y1="292.26" x2="578.67" y2="275.27" stroke="#a8a098" stroke-opacity="0.08" stroke-width="0.8"/><line x1="1202.58" y1="340.03" x2="933.38" y2="311.18" stroke="#a8a098" stroke-opacity="0.22" stroke-width="0.8"/><line x1="933.38" y1="311.18" x2="756.79" y2="292.26" stroke="#a8a098" stroke-opacity="0.15" stroke-width="0.8"/><line x1="756.79" y1="292.26" x2="598.19" y2="275.27" stroke="#a8a098" stroke-opacity="0.08" stroke-width="0.8"/><line x1="1265.27" y1="340.03" x2="976.84" y2="311.18" stroke="#a8a098" stroke-opacity="0.22" stroke-width="0.8"/><line x1="976.84" y1="311.18" x2="787.63" y2="292.26" stroke="#a8a098" stroke-opacity="0.15" stroke-width="0.8"/><line x1="787.63" y1="292.26" x2="617.70" y2="275.27" stroke="#a8a098" stroke-opacity="0.08" stroke-width="0.8"/><line x1="1327.95" y1="340.03" x2="1020.30" y2="311.18" stroke="#a8a098" stroke-opacity="0.22" stroke-width="0.8"/><line x1="1020.30" y1="311.18" x2="818.47" y2="292.26" stroke="#a8a098" stroke-opacity="0.15" stroke-width="0.8"/><line x1="818.47" y1="292.26" x2="637.21" y2="275.27" stroke="#a8a098" stroke-opacity="0.08" stroke-width="0.8"/></g>
<polygon points="11.58,340.03 638.42,340.03 1151.67,494.00 -501.67,494.00" fill="url(#floorShade)" />
<g><polygon points="-387.21,481.94 -381.73,479.77 -379.85,478.21 -381.99,477.65 -435.12,477.65 -440.84,478.21 -448.84,479.77 -457.05,481.94 -566.39,514.92 -565.19,514.92 -561.91,514.92 -557.43,514.92 -495.75,514.92 -491.27,514.92 -487.99,514.92 -486.79,514.92" fill="#5a6878" fill-opacity="0.36"/><polygon points="-194.83,418.20 -192.10,417.05 -191.65,416.21 -193.56,415.91 -232.53,415.91 -236.36,416.21 -241.21,417.05 -245.80,418.20 -304.27,435.85 -308.14,437.27 -309.29,438.33 -307.36,438.71 -263.17,438.71 -258.77,438.33 -253.23,437.27 -248.08,435.85" fill="#5a6878" fill-opacity="0.36"/><polygon points="-84.27,381.58 -82.71,380.86 -82.78,380.34 -84.44,380.15 -115.20,380.15 -118.06,380.34 -121.43,380.86 -124.40,381.58 -159.88,392.28 -162.02,393.13 -162.28,393.75 -160.57,393.98 -126.64,393.98 -123.47,393.75 -119.78,393.13 -116.58,392.28" fill="#5a6878" fill-opacity="0.36"/><polygon points="-12.50,357.80 -11.52,357.31 -11.80,356.96 -13.26,356.83 -38.67,356.83 -40.95,356.96 -43.47,357.31 -45.59,357.80 -69.38,364.98 -70.70,365.54 -70.60,365.95 -69.09,366.10 -41.55,366.10 -39.09,365.95 -36.38,365.54 -34.16,364.98" fill="#5a6878" fill-opacity="0.36"/><polygon points="37.86,341.12 38.51,340.77 38.13,340.51 36.84,340.42 15.19,340.42 13.31,340.51 11.30,340.77 9.71,341.12 -7.35,346.27 -8.22,346.66 -7.95,346.95 -6.62,347.06 16.56,347.06 18.57,346.95 20.68,346.66 22.33,346.27" fill="#5a6878" fill-opacity="0.36"/><polygon points="-209.63,445.09 -206.37,443.55 -205.78,442.44 -207.95,442.03 -252.91,442.03 -257.37,442.44 -263.09,443.55 -268.57,445.09 -340.01,469.06 -344.87,471.03 -346.47,472.49 -344.28,473.03 -292.22,473.03 -286.97,472.49 -280.28,471.03 -273.99,469.06" fill="#5a6878" fill-opacity="0.36"/><polygon points="-82.40,397.71 -80.67,396.82 -80.75,396.17 -82.61,395.93 -116.99,395.93 -120.19,396.17 -123.96,396.82 -127.31,397.71 -167.64,411.24 -170.11,412.32 -170.45,413.12 -168.53,413.41 -130.13,413.41 -126.55,413.12 -122.36,412.32 -118.73,411.24" fill="#5a6878" fill-opacity="0.36"/><polygon points="-4.08,368.55 -3.06,367.96 -3.39,367.54 -5.00,367.38 -32.84,367.38 -35.32,367.54 -38.07,367.96 -40.36,368.55 -66.23,377.23 -67.67,377.91 -67.54,378.41 -65.88,378.59 -35.47,378.59 -32.76,378.41 -29.80,377.91 -27.39,377.23" fill="#5a6878" fill-opacity="0.36"/><polygon points="48.98,348.79 49.63,348.38 49.19,348.08 47.78,347.97 24.40,347.97 22.38,348.08 20.24,348.38 18.55,348.79 0.55,354.83 -0.35,355.29 -0.03,355.64 1.42,355.76 26.59,355.76 28.76,355.64 31.03,355.29 32.77,354.83" fill="#5a6878" fill-opacity="0.36"/><polygon points="-229.92,481.94 -225.88,479.77 -225.04,478.21 -227.56,477.65 -280.69,477.65 -286.03,478.21 -292.99,479.77 -299.76,481.94 -387.11,514.92 -385.91,514.92 -382.63,514.92 -378.14,514.92 -316.47,514.92 -311.99,514.92 -308.71,514.92 -307.51,514.92" fill="#5a6878" fill-opacity="0.36"/><polygon points="-80.02,418.20 -78.07,417.05 -78.18,416.21 -80.29,415.91 -119.26,415.91 -122.89,416.21 -127.17,417.05 -131.00,418.20 -177.71,435.85 -180.63,437.27 -181.07,438.33 -178.88,438.71 -134.69,438.71 -130.55,438.33 -125.72,437.27 -121.52,435.85" fill="#5a6878" fill-opacity="0.36"/><polygon points="6.11,381.58 7.20,380.86 6.79,380.34 5.00,380.15 -25.77,380.15 -28.50,380.34 -31.52,380.86 -34.02,381.58 -62.36,392.28 -63.93,393.13 -63.78,393.75 -61.92,393.98 -27.98,393.98 -24.97,393.75 -21.70,393.13 -19.06,392.28" fill="#5a6878" fill-opacity="0.36"/><polygon points="62.04,357.80 62.69,357.31 62.17,356.96 60.63,356.83 35.21,356.83 33.03,356.96 30.74,357.31 28.95,357.80 9.94,364.98 9.00,365.54 9.37,365.95 10.97,366.10 38.52,366.10 40.88,365.95 43.31,365.54 45.16,364.98" fill="#5a6878" fill-opacity="0.36"/><polygon points="101.28,341.12 101.68,340.77 101.14,340.51 99.79,340.42 78.13,340.42 76.31,340.51 74.48,340.77 73.12,341.12 59.49,346.27 58.89,346.66 59.35,346.95 60.76,347.06 83.93,347.06 85.87,346.95 87.79,346.66 89.17,346.27" fill="#5a6878" fill-opacity="0.36"/><polygon points="-76.91,445.09 -74.67,443.55 -74.82,442.44 -77.26,442.03 -122.22,442.03 -126.41,442.44 -131.38,443.55 -135.84,445.09 -191.31,469.06 -194.86,471.03 -195.47,472.49 -192.93,473.03 -140.87,473.03 -135.98,472.49 -130.26,471.03 -125.28,469.06" fill="#5a6878" fill-opacity="0.36"/><polygon points="18.74,397.71 19.88,396.82 19.36,396.17 17.34,395.93 -17.04,395.93 -20.08,396.17 -23.42,396.82 -26.17,397.71 -57.48,411.24 -59.23,412.32 -59.03,413.12 -56.92,413.41 -18.53,413.41 -15.14,413.12 -11.48,412.32 -8.57,411.24" fill="#5a6878" fill-opacity="0.36"/><polygon points="77.61,368.55 78.25,367.96 77.63,367.54 75.92,367.38 48.09,367.38 45.71,367.54 43.24,367.96 41.34,368.55 21.25,377.23 20.27,377.91 20.73,378.41 22.51,378.59 52.92,378.59 55.51,378.41 58.14,377.91 60.10,377.23" fill="#5a6878" fill-opacity="0.36"/><polygon points="117.50,348.79 117.88,348.38 117.24,348.08 115.76,347.97 92.38,347.97 90.43,348.08 88.49,348.38 87.08,348.79 73.11,354.83 72.51,355.29 73.06,355.64 74.60,355.76 99.77,355.76 101.85,355.64 103.89,355.29 105.32,354.83" fill="#5a6878" fill-opacity="0.36"/><polygon points="-72.63,481.94 -70.03,479.77 -70.23,478.21 -73.13,477.65 -126.25,477.65 -131.22,478.21 -137.14,479.77 -142.47,481.94 -207.83,514.92 -206.63,514.92 -203.34,514.92 -198.86,514.92 -137.19,514.92 -132.71,514.92 -129.43,514.92 -128.23,514.92" fill="#5a6878" fill-opacity="0.36"/><polygon points="34.78,418.20 35.96,417.05 35.30,416.21 32.98,415.91 -5.98,415.91 -9.41,416.21 -13.14,417.05 -16.19,418.20 -51.15,435.85 -53.11,437.27 -52.85,438.33 -50.41,438.71 -6.21,438.71 -2.34,438.33 1.79,437.27 5.05,435.85" fill="#5a6878" fill-opacity="0.36"/><polygon points="96.50,381.58 97.11,380.86 96.35,380.34 94.43,380.15 63.67,380.15 61.06,380.34 58.39,380.86 56.37,381.58 35.17,392.28 34.15,393.13 34.72,393.75 36.73,393.98 70.67,393.98 73.53,393.75 76.39,393.13 78.46,392.28" fill="#5a6878" fill-opacity="0.36"/><polygon points="136.57,357.80 136.90,357.31 136.15,356.96 134.52,356.83 109.10,356.83 107.00,356.96 104.95,357.31 103.48,357.80 89.26,364.98 88.69,365.54 89.34,365.95 91.04,366.10 118.59,366.10 120.84,365.95 123.00,365.54 124.48,364.98" fill="#5a6878" fill-opacity="0.36"/><polygon points="164.69,341.12 164.86,340.77 164.14,340.51 162.73,340.42 141.08,340.42 139.32,340.51 137.66,340.77 136.53,341.12 126.34,346.27 126.00,346.66 126.66,346.95 128.13,347.06 151.31,347.06 153.17,346.95 154.90,346.66 156.02,346.27" fill="#5a6878" fill-opacity="0.36"/><polygon points="55.82,445.09 57.03,443.55 56.14,442.44 53.43,442.03 8.47,442.03 4.54,442.44 0.32,443.55 -3.11,445.09 -42.60,469.06 -44.84,471.03 -44.48,472.49 -41.58,473.03 10.49,473.03 15.01,472.49 19.76,471.03 23.43,469.06" fill="#5a6878" fill-opacity="0.36"/><polygon points="119.88,397.71 120.42,396.82 119.47,396.17 117.30,395.93 82.91,395.93 80.03,396.17 77.13,396.82 74.98,397.71 52.68,411.24 51.65,412.32 52.38,413.12 54.69,413.41 93.08,413.41 96.27,413.12 99.39,412.32 101.59,411.24" fill="#5a6878" fill-opacity="0.36"/><polygon points="159.31,368.55 159.56,367.96 158.66,367.54 156.85,367.38 129.01,367.38 126.73,367.54 124.55,367.96 123.04,368.55 108.74,377.23 108.21,377.91 109.00,378.41 110.91,378.59 141.32,378.59 143.78,378.41 146.07,377.91 147.58,377.23" fill="#5a6878" fill-opacity="0.36"/><polygon points="186.03,348.79 186.13,348.38 185.29,348.08 183.74,347.97 160.36,347.97 158.48,348.08 156.74,348.38 155.60,348.79 145.66,354.83 145.37,355.29 146.15,355.64 147.77,355.76 172.94,355.76 174.94,355.64 176.75,355.29 177.87,354.83" fill="#5a6878" fill-opacity="0.36"/><polygon points="84.66,481.94 85.82,479.77 84.58,478.21 81.30,477.65 28.18,477.65 23.58,478.21 18.71,479.77 14.82,481.94 -28.54,514.92 -27.34,514.92 -24.06,514.92 -19.58,514.92 42.09,514.92 46.57,514.92 49.86,514.92 51.06,514.92" fill="#5a6878" fill-opacity="0.36"/><polygon points="149.58,418.20 149.99,417.05 148.77,416.21 146.26,415.91 107.29,415.91 104.06,416.21 100.89,417.05 98.61,418.20 75.42,435.85 74.40,437.27 75.36,438.33 78.07,438.71 122.26,438.71 125.88,438.33 129.31,437.27 131.61,435.85" fill="#5a6878" fill-opacity="0.36"/><polygon points="186.89,381.58 187.02,380.86 185.91,380.34 183.87,380.15 153.10,380.15 150.62,380.34 148.30,380.86 146.76,381.58 132.69,392.28 132.23,393.13 133.22,393.75 135.39,393.98 169.32,393.98 172.03,393.75 174.47,393.13 175.99,392.28" fill="#5a6878" fill-opacity="0.36"/><polygon points="211.11,357.80 211.11,357.31 210.12,356.96 208.41,356.83 182.99,356.83 180.97,356.96 179.16,357.31 178.02,357.80 168.58,364.98 168.38,365.54 169.30,365.95 171.11,366.10 198.65,366.10 200.81,365.95 202.70,365.54 203.80,364.98" fill="#5a6878" fill-opacity="0.36"/><polygon points="228.10,341.12 228.04,340.77 227.15,340.51 225.67,340.42 204.02,340.42 202.33,340.51 200.84,340.77 199.95,341.12 193.18,346.27 193.11,346.66 193.96,346.95 195.51,347.06 218.68,347.06 220.48,346.95 222.01,346.66 222.86,346.27" fill="#5a6878" fill-opacity="0.36"/><polygon points="188.55,445.09 188.73,443.55 187.10,442.44 184.12,442.03 139.16,442.03 135.50,442.44 132.02,443.55 129.62,445.09 106.11,469.06 105.18,471.03 106.51,472.49 109.78,473.03 161.84,473.03 166.00,472.49 169.78,471.03 172.13,469.06" fill="#5a6878" fill-opacity="0.36"/><polygon points="221.03,397.71 220.97,396.82 219.58,396.17 217.25,395.93 182.87,395.93 180.14,396.17 177.67,396.82 176.12,397.71 162.84,411.24 162.53,412.32 163.79,413.12 166.29,413.41 204.69,413.41 207.68,413.12 210.27,412.32 211.75,411.24" fill="#5a6878" fill-opacity="0.36"/><polygon points="241.01,368.55 240.87,367.96 239.68,367.54 237.77,367.38 209.93,367.38 207.76,367.54 205.86,367.96 204.74,368.55 196.22,377.23 196.15,377.91 197.27,378.41 199.30,378.59 229.71,378.59 232.05,378.41 234.01,377.91 235.07,377.23" fill="#5a6878" fill-opacity="0.36"/><polygon points="254.55,348.79 254.38,348.38 253.34,348.08 251.72,347.97 228.33,347.97 226.53,348.08 224.99,348.38 224.13,348.79 218.21,354.83 218.24,355.29 219.24,355.64 220.95,355.76 246.12,355.76 248.04,355.64 249.61,355.29 250.42,354.83" fill="#5a6878" fill-opacity="0.36"/><polygon points="241.95,481.94 241.67,479.77 239.39,478.21 235.74,477.65 182.61,477.65 178.39,478.21 174.56,479.77 172.11,481.94 150.74,514.92 151.94,514.92 155.22,514.92 159.70,514.92 221.37,514.92 225.86,514.92 229.14,514.92 230.34,514.92" fill="#5a6878" fill-opacity="0.36"/><polygon points="264.38,418.20 264.03,417.05 262.25,416.21 259.53,415.91 220.56,415.91 217.54,416.21 214.92,417.05 213.41,418.20 201.98,435.85 201.91,437.27 203.58,438.33 206.54,438.71 250.74,438.71 254.10,438.33 256.82,437.27 258.17,435.85" fill="#5a6878" fill-opacity="0.36"/><polygon points="277.28,381.58 276.93,380.86 275.47,380.34 273.31,380.15 242.54,380.15 240.18,380.34 238.21,380.86 237.14,381.58 230.21,392.28 230.32,393.13 231.72,393.75 234.04,393.98 267.98,393.98 270.53,393.75 272.55,393.13 273.51,392.28" fill="#5a6878" fill-opacity="0.36"/><polygon points="285.65,357.80 285.32,357.31 284.09,356.96 282.29,356.83 256.88,356.83 254.95,356.96 253.37,357.31 252.55,357.80 247.90,364.98 248.07,365.54 249.27,365.95 251.18,366.10 278.72,366.10 280.78,365.95 282.39,365.54 283.12,364.98" fill="#5a6878" fill-opacity="0.36"/><polygon points="291.52,341.12 291.22,340.77 290.16,340.51 288.62,340.42 266.97,340.42 265.33,340.51 264.01,340.77 263.36,341.12 260.03,346.27 260.22,346.66 261.26,346.95 262.88,347.06 286.06,347.06 287.78,346.95 289.12,346.66 289.71,346.27" fill="#5a6878" fill-opacity="0.36"/><polygon points="321.28,445.09 320.43,443.55 318.06,442.44 314.81,442.03 269.85,442.03 266.46,442.44 263.72,443.55 262.35,445.09 254.81,469.06 255.20,471.03 257.51,472.49 261.13,473.03 313.19,473.03 317.00,472.49 319.79,471.03 320.84,469.06" fill="#5a6878" fill-opacity="0.36"/><polygon points="322.17,397.71 321.51,396.82 319.69,396.17 317.20,395.93 282.82,395.93 280.25,396.17 278.22,396.82 277.26,397.71 273.00,411.24 273.41,412.32 275.20,413.12 277.90,413.41 316.29,413.41 319.10,413.12 321.15,412.32 321.92,411.24" fill="#5a6878" fill-opacity="0.36"/><polygon points="322.71,368.55 322.18,367.96 320.71,367.54 318.69,367.38 290.85,367.38 288.78,367.54 287.17,367.96 286.44,368.55 283.71,377.23 284.08,377.91 285.54,378.41 287.70,378.59 318.11,378.59 320.32,378.41 321.95,377.91 322.55,377.23" fill="#5a6878" fill-opacity="0.36"/><polygon points="323.08,348.79 322.63,348.38 321.39,348.08 319.70,347.97 296.31,347.97 294.58,348.08 293.24,348.38 292.66,348.79 290.76,354.83 291.10,355.29 292.33,355.64 294.12,355.76 319.29,355.76 321.13,355.64 322.47,355.29 322.97,354.83" fill="#5a6878" fill-opacity="0.36"/><polygon points="399.24,481.94 397.52,479.77 394.20,478.21 390.17,477.65 337.05,477.65 333.20,478.21 330.41,479.77 329.40,481.94 330.02,514.92 331.22,514.92 334.50,514.92 338.98,514.92 400.66,514.92 405.14,514.92 408.42,514.92 409.62,514.92" fill="#5a6878" fill-opacity="0.36"/><polygon points="379.19,418.20 378.06,417.05 375.72,416.21 372.80,415.91 333.84,415.91 331.01,416.21 328.96,417.05 328.21,418.20 328.54,435.85 329.42,437.27 331.80,438.33 335.02,438.71 379.22,438.71 382.31,438.33 384.33,437.27 384.74,435.85" fill="#5a6878" fill-opacity="0.36"/><polygon points="367.66,381.58 366.83,380.86 365.03,380.34 362.74,380.15 331.98,380.15 329.75,380.34 328.12,380.86 327.53,381.58 327.73,392.28 328.40,393.13 330.22,393.75 332.69,393.98 366.63,393.98 369.03,393.75 370.64,393.13 371.03,392.28" fill="#5a6878" fill-opacity="0.36"/><polygon points="360.18,357.80 359.53,357.31 358.07,356.96 356.18,356.83 330.76,356.83 328.92,356.96 327.57,357.31 327.09,357.80 327.22,364.98 327.77,365.54 329.24,365.95 331.25,366.10 358.79,366.10 360.75,365.95 362.08,365.54 362.44,364.98" fill="#5a6878" fill-opacity="0.36"/><polygon points="354.93,341.12 354.40,340.77 353.16,340.51 351.56,340.42 329.91,340.42 328.34,340.51 327.19,340.77 326.78,341.12 326.87,346.27 327.33,346.66 328.57,346.95 330.26,347.06 353.43,347.06 355.08,346.95 356.23,346.66 356.55,346.27" fill="#5a6878" fill-opacity="0.36"/><polygon points="454.01,445.09 452.13,443.55 449.02,442.44 445.50,442.03 400.54,442.03 397.42,442.44 395.42,443.55 395.08,445.09 403.52,469.06 405.21,471.03 408.50,472.49 412.48,473.03 464.55,473.03 467.99,472.49 469.81,471.03 469.54,469.06" fill="#5a6878" fill-opacity="0.36"/><polygon points="423.31,397.71 422.06,396.82 419.80,396.17 417.16,395.93 382.77,395.93 380.36,396.17 378.76,396.82 378.40,397.71 383.16,411.24 384.29,412.32 386.61,413.12 389.51,413.41 427.90,413.41 430.51,413.12 432.03,412.32 432.08,411.24" fill="#5a6878" fill-opacity="0.36"/><polygon points="404.41,368.55 403.49,367.96 401.73,367.54 399.61,367.38 371.77,367.38 369.81,367.54 368.48,367.96 368.14,368.55 371.19,377.23 372.02,377.91 373.81,378.41 376.09,378.59 406.50,378.59 408.59,378.41 409.89,377.91 410.03,377.23" fill="#5a6878" fill-opacity="0.36"/><polygon points="391.61,348.79 390.88,348.38 389.44,348.08 387.68,347.97 364.29,347.97 362.63,348.08 361.49,348.38 361.18,348.79 363.31,354.83 363.96,355.29 365.42,355.64 367.30,355.76 392.47,355.76 394.22,355.64 395.33,355.29 395.52,354.83" fill="#5a6878" fill-opacity="0.36"/><polygon points="556.53,481.94 553.37,479.77 549.01,478.21 544.60,477.65 491.48,477.65 488.01,478.21 486.26,479.77 486.70,481.94 509.30,514.92 510.50,514.92 513.78,514.92 518.27,514.92 579.94,514.92 584.42,514.92 587.70,514.92 588.90,514.92" fill="#5a6878" fill-opacity="0.36"/><polygon points="493.99,418.20 492.09,417.05 489.20,416.21 486.07,415.91 447.11,415.91 444.49,416.21 442.99,417.05 443.02,418.20 455.11,435.85 456.94,437.27 460.01,438.33 463.50,438.71 507.69,438.71 510.53,438.33 511.84,437.27 511.30,435.85" fill="#5a6878" fill-opacity="0.36"/><polygon points="458.05,381.58 456.74,380.86 454.60,380.34 452.18,380.15 421.41,380.15 419.31,380.34 418.03,380.86 417.92,381.58 425.25,392.28 426.49,393.13 428.72,393.75 431.35,393.98 465.29,393.98 467.53,393.75 468.72,393.13 468.55,392.28" fill="#5a6878" fill-opacity="0.36"/><polygon points="434.72,357.80 433.74,357.31 432.04,356.96 430.07,356.83 404.65,356.83 402.89,356.96 401.78,357.31 401.62,357.80 406.54,364.98 407.46,365.54 409.21,365.95 411.31,366.10 438.86,366.10 440.71,365.95 441.77,365.54 441.76,364.98" fill="#5a6878" fill-opacity="0.36"/><polygon points="418.35,341.12 417.58,340.77 416.17,340.51 414.51,340.42 392.85,340.42 391.35,340.51 390.37,340.77 390.19,341.12 393.72,346.27 394.44,346.66 395.87,346.95 397.63,347.06 420.81,347.06 422.39,346.95 423.33,346.66 423.40,346.27" fill="#5a6878" fill-opacity="0.36"/><polygon points="586.74,445.09 583.83,443.55 579.98,442.44 576.18,442.03 531.23,442.03 528.38,442.44 527.12,443.55 527.81,445.09 552.22,469.06 555.23,471.03 559.49,472.49 563.84,473.03 615.90,473.03 618.98,472.49 619.83,471.03 618.25,469.06" fill="#5a6878" fill-opacity="0.36"/><polygon points="524.45,397.71 522.60,396.82 519.92,396.17 517.11,395.93 482.73,395.93 480.47,396.17 479.30,396.82 479.55,397.71 493.33,411.24 495.17,412.32 498.02,413.12 501.12,413.41 539.51,413.41 541.92,413.12 542.91,412.32 542.24,411.24" fill="#5a6878" fill-opacity="0.36"/><polygon points="486.11,368.55 484.80,367.96 482.76,367.54 480.53,367.38 452.69,367.38 450.83,367.54 449.78,367.96 449.84,368.55 458.68,377.23 459.96,377.91 462.09,378.41 464.49,378.59 494.89,378.59 496.86,378.41 497.82,377.91 497.52,377.23" fill="#5a6878" fill-opacity="0.36"/><polygon points="460.13,348.79 459.13,348.38 457.50,348.08 455.65,347.97 432.27,347.97 430.68,348.08 429.74,348.38 429.71,348.79 435.86,354.83 436.82,355.29 438.51,355.64 440.47,355.76 465.64,355.76 467.31,355.64 468.19,355.29 468.07,354.83" fill="#5a6878" fill-opacity="0.36"/><polygon points="713.82,481.94 709.21,479.77 703.82,478.21 699.04,477.65 645.91,477.65 642.82,478.21 642.11,479.77 643.99,481.94 688.58,514.92 689.79,514.92 693.07,514.92 697.55,514.92 759.22,514.92 763.70,514.92 766.98,514.92 768.19,514.92" fill="#5a6878" fill-opacity="0.36"/><polygon points="608.79,418.20 606.13,417.05 602.67,416.21 599.35,415.91 560.38,415.91 557.97,416.21 557.02,417.05 557.82,418.20 581.67,435.85 584.45,437.27 588.23,438.33 591.97,438.71 636.17,438.71 638.75,438.33 639.36,437.27 637.86,435.85" fill="#5a6878" fill-opacity="0.36"/><polygon points="548.44,381.58 546.65,380.86 544.16,380.34 541.61,380.15 510.85,380.15 508.87,380.34 507.94,380.86 508.30,381.58 522.77,392.28 524.57,393.13 527.22,393.75 530.00,393.98 563.94,393.98 566.03,393.75 566.81,393.13 566.07,392.28" fill="#5a6878" fill-opacity="0.36"/><polygon points="509.25,357.80 507.95,357.31 506.01,356.96 503.96,356.83 478.54,356.83 476.87,356.96 475.99,357.31 476.16,357.80 485.86,364.98 487.15,365.54 489.17,365.95 491.38,366.10 518.92,366.10 520.68,365.95 521.47,365.54 521.08,364.98" fill="#5a6878" fill-opacity="0.36"/><polygon points="481.76,341.12 480.75,340.77 479.18,340.51 477.45,340.42 455.80,340.42 454.35,340.51 453.55,340.77 453.60,341.12 460.56,346.27 461.55,346.66 463.17,346.95 465.00,347.06 488.18,347.06 489.69,346.95 490.44,346.66 490.24,346.27" fill="#5a6878" fill-opacity="0.36"/><polygon points="719.47,445.09 715.53,443.55 710.93,442.44 706.87,442.03 661.92,442.03 659.34,442.44 658.82,443.55 660.54,445.09 700.93,469.06 705.25,471.03 710.49,472.49 715.19,473.03 767.25,473.03 769.98,472.49 769.85,471.03 766.95,469.06" fill="#5a6878" fill-opacity="0.36"/><polygon points="625.59,397.71 623.14,396.82 620.03,396.17 617.06,395.93 582.68,395.93 580.58,396.17 579.85,396.82 580.69,397.71 603.49,411.24 606.05,412.32 609.43,413.12 612.72,413.41 651.12,413.41 653.33,413.12 653.79,412.32 652.40,411.24" fill="#5a6878" fill-opacity="0.36"/><polygon points="567.81,368.55 566.10,367.96 563.78,367.54 561.45,367.38 533.62,367.38 531.86,367.54 531.09,367.96 531.54,368.55 546.16,377.23 547.89,377.91 550.36,378.41 552.88,378.59 583.29,378.59 585.14,378.41 585.76,377.91 585.00,377.23" fill="#5a6878" fill-opacity="0.36"/><polygon points="528.66,348.79 527.39,348.38 525.55,348.08 523.63,347.97 500.25,347.97 498.73,348.08 498.00,348.38 498.23,348.79 508.41,354.83 509.68,355.29 511.60,355.64 513.64,355.76 538.82,355.76 540.40,355.64 541.06,355.29 540.62,354.83" fill="#5a6878" fill-opacity="0.36"/><polygon points="871.11,481.94 865.06,479.77 858.63,478.21 853.47,477.65 800.35,477.65 797.63,478.21 797.95,479.77 801.28,481.94 867.87,514.92 869.07,514.92 872.35,514.92 876.83,514.92 938.50,514.92 942.99,514.92 946.27,514.92 947.47,514.92" fill="#5a6878" fill-opacity="0.36"/><polygon points="723.60,418.20 720.16,417.05 716.15,416.21 712.62,415.91 673.65,415.91 671.44,416.21 671.05,417.05 672.62,418.20 708.23,435.85 711.96,437.27 716.45,438.33 720.45,438.71 764.65,438.71 766.96,438.33 766.87,437.27 764.43,435.85" fill="#5a6878" fill-opacity="0.36"/><polygon points="638.82,381.58 636.56,380.86 633.72,380.34 631.05,380.15 600.28,380.15 598.43,380.34 597.85,380.86 598.69,381.58 620.30,392.28 622.66,393.13 625.72,393.75 628.66,393.98 662.59,393.98 664.53,393.75 664.89,393.13 663.60,392.28" fill="#5a6878" fill-opacity="0.36"/><polygon points="583.79,357.80 582.16,357.31 579.99,356.96 577.84,356.83 552.43,356.83 550.84,356.96 550.20,357.31 550.69,357.80 565.18,364.98 566.84,365.54 569.14,365.95 571.45,366.10 598.99,366.10 600.65,365.95 601.16,365.54 600.40,364.98" fill="#5a6878" fill-opacity="0.36"/><polygon points="545.17,341.12 543.93,340.77 542.18,340.51 540.40,340.42 518.74,340.42 517.36,340.51 516.73,340.77 517.02,341.12 527.41,346.27 528.65,346.66 530.48,346.95 532.38,347.06 555.56,347.06 556.99,346.95 557.55,346.66 557.09,346.27" fill="#5a6878" fill-opacity="0.36"/><polygon points="852.20,445.09 847.24,443.55 841.89,442.44 837.56,442.03 792.60,442.03 790.30,442.44 790.52,443.55 793.27,445.09 849.63,469.06 855.27,471.03 861.48,472.49 866.54,473.03 918.61,473.03 920.97,472.49 919.87,471.03 915.66,469.06" fill="#5a6878" fill-opacity="0.36"/><polygon points="726.74,397.71 723.69,396.82 720.14,396.17 717.02,395.93 682.63,395.93 680.69,396.17 680.39,396.82 681.83,397.71 713.65,411.24 716.92,412.32 720.84,413.12 724.33,413.41 762.72,413.41 764.74,413.12 764.67,412.32 762.56,411.24" fill="#5a6878" fill-opacity="0.36"/><polygon points="649.51,368.55 647.41,367.96 644.81,367.54 642.37,367.38 614.54,367.38 612.88,367.54 612.40,367.96 613.24,368.55 633.65,377.23 635.83,377.91 638.63,378.41 641.27,378.59 671.68,378.59 673.41,378.41 673.70,377.91 672.49,377.23" fill="#5a6878" fill-opacity="0.36"/><polygon points="597.19,348.79 595.64,348.38 593.60,348.08 591.61,347.97 568.23,347.97 566.79,348.08 566.25,348.38 566.76,348.79 580.96,354.83 582.54,355.29 584.69,355.64 586.82,355.76 611.99,355.76 613.49,355.64 613.92,355.29 613.17,354.83" fill="#5a6878" fill-opacity="0.36"/><polygon points="1028.40,481.94 1020.91,479.77 1013.44,478.21 1007.90,477.65 954.78,477.65 952.44,478.21 953.80,479.77 958.57,481.94 1047.15,514.92 1048.35,514.92 1051.63,514.92 1056.11,514.92 1117.79,514.92 1122.27,514.92 1125.55,514.92 1126.75,514.92" fill="#5a6878" fill-opacity="0.36"/><polygon points="838.40,418.20 834.19,417.05 829.63,416.21 825.89,415.91 786.93,415.91 784.92,416.21 785.09,417.05 787.43,418.20 834.80,435.85 839.48,437.27 844.66,438.33 848.93,438.71 893.12,438.71 895.18,438.33 894.38,437.27 890.99,435.85" fill="#5a6878" fill-opacity="0.36"/><polygon points="729.21,381.58 726.47,380.86 723.28,380.34 720.49,380.15 689.72,380.15 688.00,380.34 687.76,380.86 689.08,381.58 717.82,392.28 720.74,393.13 724.22,393.75 727.31,393.98 761.25,393.98 763.03,393.75 762.98,393.13 761.12,392.28" fill="#5a6878" fill-opacity="0.36"/><polygon points="658.32,357.80 656.37,357.31 653.96,356.96 651.73,356.83 626.31,356.83 624.81,356.96 624.41,357.31 625.23,357.80 644.50,364.98 646.54,365.54 649.11,365.95 651.52,366.10 679.06,366.10 680.61,365.95 680.85,365.54 679.72,364.98" fill="#5a6878" fill-opacity="0.36"/><polygon points="608.59,341.12 607.11,340.77 605.19,340.51 603.34,340.42 581.69,340.42 580.37,340.51 579.91,340.77 580.43,341.12 594.25,346.27 595.76,346.66 597.78,346.95 599.75,347.06 622.93,347.06 624.30,346.95 624.66,346.66 623.93,346.27" fill="#5a6878" fill-opacity="0.36"/><polygon points="984.93,445.09 978.94,443.55 972.85,442.44 968.25,442.03 923.29,442.03 921.25,442.44 922.23,443.55 926.00,445.09 998.34,469.06 1005.28,471.03 1012.47,472.49 1017.90,473.03 1069.96,473.03 1071.96,472.49 1069.88,471.03 1064.36,469.06" fill="#5a6878" fill-opacity="0.36"/><polygon points="827.88,397.71 824.23,396.82 820.25,396.17 816.97,395.93 782.58,395.93 780.80,396.17 780.94,396.82 782.97,397.71 823.81,411.24 827.80,412.32 832.25,413.12 835.94,413.41 874.33,413.41 876.15,413.12 875.55,412.32 872.72,411.24" fill="#5a6878" fill-opacity="0.36"/><polygon points="731.21,368.55 728.72,367.96 725.83,367.54 723.30,367.38 695.46,367.38 693.91,367.54 693.71,367.96 694.93,368.55 721.13,377.23 723.77,377.91 726.90,378.41 729.67,378.59 760.08,378.59 761.68,378.41 761.63,377.91 759.97,377.23" fill="#5a6878" fill-opacity="0.36"/><polygon points="665.71,348.79 663.89,348.38 661.65,348.08 659.59,347.97 636.20,347.97 634.84,348.08 634.50,348.38 635.29,348.79 653.51,354.83 655.40,355.29 657.78,355.64 659.99,355.76 685.17,355.76 686.58,355.64 686.78,355.29 685.72,354.83" fill="#5a6878" fill-opacity="0.36"/></g>
<g stroke="#9a9a9a" stroke-opacity="0.55" stroke-width="0.9"><line x1="-439.39" y1="475.32" x2="1089.39" y2="475.32"/><line x1="-237.17" y1="414.65" x2="887.17" y2="414.65"/><line x1="-119.56" y1="379.37" x2="769.56" y2="379.37"/><line x1="-42.65" y1="356.29" x2="692.65" y2="356.29"/><line x1="11.58" y1="340.03" x2="638.42" y2="340.03"/><line x1="11.58" y1="340.03" x2="-501.67" y2="494.00"/><line x1="74.26" y1="340.03" x2="-336.33" y2="494.00"/><line x1="136.95" y1="340.03" x2="-171.00" y2="494.00"/><line x1="199.63" y1="340.03" x2="-5.67" y2="494.00"/><line x1="262.32" y1="340.03" x2="159.67" y2="494.00"/><line x1="325.00" y1="340.03" x2="325.00" y2="494.00"/><line x1="387.68" y1="340.03" x2="490.33" y2="494.00"/><line x1="450.37" y1="340.03" x2="655.67" y2="494.00"/><line x1="513.05" y1="340.03" x2="821.00" y2="494.00"/><line x1="575.74" y1="340.03" x2="986.33" y2="494.00"/><line x1="638.42" y1="340.03" x2="1151.67" y2="494.00"/></g>
<circle cx="325.00" cy="245.80" r="57.5" fill="url(#sphV)"/><circle cx="325.00" cy="245.80" r="57.5" fill="url(#sphL)"/><circle cx="325.00" cy="245.80" r="57.5" fill="url(#sphHi)"/><circle cx="325.00" cy="245.80" r="57.5" fill="url(#sphEdge)"/>
<circle cx="325.00" cy="245.80" r="56.6" fill="none" stroke="#e6f4d8" stroke-width="0.8"/>
<circle cx="325.00" cy="245.80" r="57.7" fill="none" stroke="#f2621a" stroke-width="1.3"/>
<line x1="268.50" y1="245.80" x2="325.00" y2="245.80" stroke="#b4e8a8" stroke-width="0.9"/>
<line x1="325.00" y1="245.80" x2="325.00" y2="302.30" stroke="#b4e8a8" stroke-width="0.9"/>
<rect x="325.00" y="231.20" width="14.6" height="14.6" fill="#c4c8fa" fill-opacity="0.75"/>
<path d="M325.00,231.20 H339.60 V245.80" fill="none" stroke="#5a78f0" stroke-width="1.1"/>
<line x1="325.00" y1="245.80" x2="325.00" y2="195.80" stroke="#74e050" stroke-width="1"/>
<line x1="325.00" y1="246.00" x2="375.50" y2="246.00" stroke="#e8805c" stroke-width="1.1"/>
<polygon points="325.00,181.30 320.70,195.60 329.30,195.60" fill="#5cd02c" />
<line x1="320.70" y1="195.60" x2="329.30" y2="195.60" stroke="#1f3a10" stroke-width="1"/>
<polygon points="388.00,245.80 375.50,241.40 375.50,250.20" fill="#e02818" />
<line x1="375.50" y1="241.40" x2="375.50" y2="250.20" stroke="#4a1008" stroke-width="1"/>
<path d="M611.00,29.50 L606.70,16.50 A4.30,1.94 0 0 1 615.30,16.50 Z" fill="#84e034"/>
<path d="M617.50,36.00 L631.50,31.70 A1.94,4.30 0 0 1 631.50,40.30 Z" fill="#e2401e"/>
<path d="M604.50,36.00 L590.50,32.00 A1.80,4.00 0 0 0 590.50,40.00 Z" fill="#d4d4d4"/>
<path d="M611.00,43.00 L607.00,55.80 A4.00,1.80 0 0 0 615.00,55.80 Z" fill="#d0d0d0"/>
<rect x="606.40" y="31.40" width="9.2" height="9.2" fill="#f2f2f2"/>
<rect x="631.50" y="13.70" width="4.5" height="3.3" fill="#d8dde6"/>
<text x="609.20" y="13.50" font-family="Liberation Sans" font-size="7" fill="#ffffff">y</text>
<text x="634.00" y="38.50" font-family="Liberation Sans" font-size="7" fill="#ffffff">x</text>
<g stroke="#4a5566" stroke-width="0.6" shape-rendering="crispEdges"><line x1="576.00" y1="6.00" x2="588.00" y2="6.00"/><line x1="576.00" y1="8.00" x2="588.00" y2="8.00"/></g>
<text x="603.00" y="75.00" font-family="Liberation Sans" font-size="9" fill="#c9d3e2">Back</text>
<path d="M602.00,69.00 L595.50,72.00 L602.00,75.00 M595.50,72.00 L602.00,72.00" stroke="#c9d3e2" stroke-width="0.8" fill="none"/>
</svg></div>
<div class="a" style="left:147px;top:53px;width:30.5px;height:119.5px;background:#1a1e25;border-radius:3px"></div>
<svg class="a" style="left:155px;top:56.5px;" width="14" height="4" viewBox="0 0 14 4"><path d="M0,0.8 H14 M0,2.8 H14" stroke="#5a5e66" stroke-width="0.8"/></svg>
<div class="a" style="left:149.5px;top:65.0px;width:26px;height:14.2px;background:#585858;border-radius:1.5px"></div>
<div class="a" style="left:149.5px;top:79.6px;width:26px;height:14.2px;background:#41607f;border-radius:1.5px"></div>
<div class="a" style="left:149.5px;top:94.6px;width:26px;height:14.2px;background:#585858;border-radius:1.5px"></div>
<div class="a" style="left:149.5px;top:109.2px;width:26px;height:14.2px;background:#585858;border-radius:1.5px"></div>
<div class="a" style="left:149.5px;top:123.8px;width:26px;height:14.2px;background:#585858;border-radius:1.5px"></div>
<div class="a" style="left:149.5px;top:138.4px;width:26px;height:14.2px;background:#585858;border-radius:1.5px"></div>
<div class="a" style="left:149.5px;top:155.0px;width:26px;height:14.2px;background:#585858;border-radius:1.5px"></div>
<svg class="a" style="left:156.5px;top:66.2px;" width="12" height="12" viewBox="0 0 12 12"><path d="M2.2,6.8 Q1.2,5.6 1.6,5.0 Q2.3,4.4 3.2,5.4 L3.4,2.6 Q3.5,1.7 4.2,1.7 Q4.9,1.7 4.9,2.6 L5.1,1.3 Q5.2,0.5 5.9,0.5 Q6.6,0.5 6.6,1.3 L6.8,1.8 Q6.9,1.1 7.6,1.1 Q8.3,1.2 8.3,2.0 L8.4,2.8 Q8.6,2.1 9.3,2.2 Q9.9,2.3 9.9,3.1 L9.8,7.5 Q9.6,10.6 6.3,10.9 Q3.8,11 2.2,6.8 Z" fill="#d8d8d8"/><path d="M4.9,2.6 V6 M6.6,1.3 V5.8 M8.3,2 V6" stroke="#585858" stroke-width="0.5"/></svg>
<svg class="a" style="left:156.5px;top:81.5px;" width="12" height="11" viewBox="0 0 12 11"><path d="M6,0.5 V10.5 M0.5,5.5 H11.5" stroke="#d8d8d8" stroke-width="0.9"/><polygon points="6,0 4.3,2.2 7.7,2.2" fill="#d8d8d8"/><polygon points="6,11 4.3,8.8 7.7,8.8" fill="#d8d8d8"/><polygon points="0,5.5 2.2,3.8 2.2,7.2" fill="#d8d8d8"/><polygon points="12,5.5 9.8,3.8 9.8,7.2" fill="#d8d8d8"/></svg>
<svg class="a" style="left:157px;top:96.5px;" width="11" height="11" viewBox="0 0 11 11"><path d="M8.5,2.5 A4,4 0 0 0 1.8,6.5 M2.5,8.5 A4,4 0 0 0 9.2,4.5" fill="none" stroke="#d8d8d8" stroke-width="0.9"/><polygon points="8,0.5 9.5,3.2 6.5,3.4" fill="#d8d8d8"/><polygon points="3,10.5 1.5,7.8 4.5,7.6" fill="#d8d8d8"/></svg>
<svg class="a" style="left:157px;top:111px;" width="11" height="11" viewBox="0 0 11 11"><rect x="0.7" y="0.7" width="9.6" height="9.6" fill="none" stroke="#d8d8d8" stroke-width="0.9"/><path d="M3.5,7.5 L8,3" stroke="#d8d8d8" stroke-width="0.9"/><polygon points="8.5,2.5 5.5,2.8 8.2,5.5" fill="#d8d8d8"/></svg>
<svg class="a" style="left:157px;top:126px;" width="11" height="11" viewBox="0 0 11 11"><rect x="1.5" y="1.5" width="8" height="8" fill="none" stroke="#d8d8d8" stroke-width="0.8" stroke-dasharray="1.2 1"/><rect x="0" y="0" width="3" height="3" fill="#d8d8d8"/><rect x="8" y="0" width="3" height="3" fill="#d8d8d8"/><rect x="0" y="8" width="3" height="3" fill="#d8d8d8"/><rect x="8" y="8" width="3" height="3" fill="#d8d8d8"/></svg>
<svg class="a" style="left:157px;top:140.5px;" width="11" height="11" viewBox="0 0 11 11"><circle cx="5.5" cy="5.5" r="3.8" fill="none" stroke="#d8d8d8" stroke-width="0.9"/><path d="M5.5,0.5 V10.5 M0.5,5.5 H10.5" stroke="#d8d8d8" stroke-width="0.9"/><path d="M9,0.5 L10.5,2 M0.5,9 L2,10.5" stroke="#d8d8d8" stroke-width="0.9"/></svg>
<svg class="a" style="left:157px;top:157px;" width="11" height="10" viewBox="0 0 11 10"><path d="M5.5,2 L2,7.5 M5.5,2 L9,7.5" stroke="#d8d8d8" stroke-width="0.9"/><rect x="4" y="0.5" width="3" height="3" fill="none" stroke="#d8d8d8" stroke-width="0.9"/><rect x="0.5" y="6.5" width="3" height="3" fill="none" stroke="#d8d8d8" stroke-width="0.9"/><rect x="7.5" y="6.5" width="3" height="3" fill="none" stroke="#d8d8d8" stroke-width="0.9"/></svg>
<div class="a" style="left:797px;top:20px;width:203px;height:14px;background:#282828;"></div>
<div class="a" style="left:797px;top:20px;width:73px;height:14px;background:#3c3c3c;"></div>
<div class="a" style="left:797px;top:20px;width:73px;height:1.5px;background:#3a72b0;"></div>
<svg class="a" style="left:801.5px;top:23px;" width="8" height="8" viewBox="0 0 8 8"><circle cx="4" cy="4" r="3.8" fill="#d0d0d0"/><rect x="3.3" y="3.3" width="1.4" height="3.3" fill="#3c3c3c"/><circle cx="4" cy="2.1" r="0.8" fill="#3c3c3c"/></svg>
<div class="a t jp" data-w="43.8" id="jp5" style="left:813.9px;top:21.20px;font-size:9.35px;color:#c4c4c4;transform:scaleX(0.6952)">インスペクター</div>
<svg class="a" style="left:973.5px;top:22.5px;" width="8" height="9" viewBox="0 0 8 9"><path d="M1.8,4.5 V3.2 A2.2,2.2 0 0 1 6.2,3.2 V4.2" fill="none" stroke="#c4c4c4" stroke-width="1"/><rect x="1" y="4.8" width="6" height="3.7" rx="1" fill="none" stroke="#c4c4c4" stroke-width="1"/></svg>
<svg class="a" style="left:988.5px;top:22.5px;" width="3" height="9" viewBox="0 0 3 9"><rect x="0.8" y="0.3" width="1.4" height="1.9" fill="#c4c4c4"/><rect x="0.8" y="3.55" width="1.4" height="1.9" fill="#c4c4c4"/><rect x="0.8" y="6.8" width="1.4" height="1.9" fill="#c4c4c4"/></svg>
<div class="a" style="left:797px;top:34px;width:203px;height:636px;background:#383838;"></div>
<div class="a" style="left:797px;top:34px;width:203px;height:41px;background:#3e3e3e;"></div>
<div class="a" style="left:797px;top:75px;width:203px;height:1px;background:#242424;"></div>
<svg class="a" style="left:801.5px;top:40.5px;" width="15" height="15" viewBox="0 0 15 15"><path d="M7.5,0.6 L14.4,4.050000000000001 L14.4,10.95 L7.5,14.4 L0.6,10.95 L0.6,4.050000000000001 Z M0.6,4.050000000000001 L7.5,7.5 L14.4,4.050000000000001 M7.5,7.5 L7.5,14.4" fill="none" stroke="#c4c4c4" stroke-width="1.0" stroke-linejoin="round"/></svg>
<svg class="a" style="left:815.5px;top:55.5px;" width="5" height="3" viewBox="0 0 5 3"><polygon points="0,0 5,0 2.5,3" fill="#c4c4c4"/></svg>
<svg class="a" style="left:827px;top:40.5px;" width="9.6" height="9.6" viewBox="0 0 9.6 9.6"><rect x="0" y="0" width="9.6" height="9.6" rx="1.5" fill="#262626"/><path d="M2.112,4.992 L4.032,6.912 L7.68,2.88" fill="none" stroke="#e6e6e6" stroke-width="1.2"/></svg>
<div class="a" style="left:841px;top:40px;width:109.5px;height:11.5px;background:#2a2a2a;border-radius:2px;border:1px solid #212121"></div>
<div class="a t" style="left:843.5px;top:40.00px;font-size:9.5px;color:#d8d8d8;font-weight:bold;">Sphere</div>
<div class="a" style="left:953px;top:41px;width:9.5px;height:9.5px;background:#2a2a2a;border-radius:1.5px"></div>
<div class="a t jp" data-w="16.7" id="jp6" style="left:964.9px;top:40.00px;font-size:9.35px;color:#c4c4c4;transform:scaleX(0.9278)">静的</div>
<svg class="a" style="left:991px;top:44.8px;" width="5" height="3" viewBox="0 0 5 3"><polygon points="0,0 5,0 2.5,3" fill="#c4c4c4"/></svg>
<div class="a t jp" data-w="11.7" id="jp7" style="left:826.5px;top:56.80px;font-size:9.35px;color:#aaaaaa;transform:scaleX(0.6500)">タグ</div>
<div class="a" style="left:843px;top:57.3px;width:63px;height:11.3px;background:#515151;border-radius:2px"></div>
<div class="a t" style="left:845.5px;top:56.80px;font-size:9px;color:#c8c8c8;">Untagged</div>
<svg class="a" style="left:898.5px;top:61.5px;" width="5" height="3" viewBox="0 0 5 3"><polygon points="0,0 5,0 2.5,3" fill="#c4c4c4"/></svg>
<div class="a t jp" data-w="26.2" id="jp8" style="left:916.7px;top:56.80px;font-size:9.35px;color:#aaaaaa;transform:scaleX(0.7278)">レイヤー</div>
<div class="a" style="left:947.5px;top:57.3px;width:49.5px;height:11.3px;background:#515151;border-radius:2px"></div>
<div class="a t" style="left:950px;top:56.80px;font-size:9px;color:#c8c8c8;">Default</div>
<svg class="a" style="left:989px;top:61.5px;" width="5" height="3" viewBox="0 0 5 3"><polygon points="0,0 5,0 2.5,3" fill="#c4c4c4"/></svg>
<div class="a" style="left:797px;top:76px;width:203px;height:13px;background:#3e3e3e;"></div>
<div class="a" style="left:797px;top:89px;width:203px;height:1px;background:#1f1f1f;"></div>
<svg class="a" style="left:802px;top:80.7px;" width="5.6" height="4" viewBox="0 0 5.6 4"><polygon points="0,0 5.6,0 2.8,4" fill="#8a8a8a"/></svg>
<svg class="a" style="left:811px;top:77.5px;" width="10" height="10" viewBox="0 0 10 10"><path d="M5,5 V0.8" stroke="#a8e040" stroke-width="1.6"/><path d="M5,5 L1.2,7.6" stroke="#40b8f0" stroke-width="1.6"/><path d="M5,5 L8.8,7.6" stroke="#f06040" stroke-width="1.6"/></svg>
<div class="a t" style="left:839.2px;top:76.80px;font-size:9.5px;color:#d2d2d2;font-weight:bold;">Transform</div>
<svg class="a" style="left:958.5px;top:78.0px;" width="9" height="9" viewBox="0 0 9 9"><circle cx="4.5" cy="4.5" r="4" fill="#c4c4c4"/><text x="4.5" y="7.4" text-anchor="middle" font-family="Liberation Sans" font-weight="bold" font-size="7" fill="#3e3e3e">?</text></svg>
<svg class="a" style="left:972.5px;top:78.0px;" width="9" height="9" viewBox="0 0 9 9"><path d="M0.5,2.6 H8.5 M0.5,6.4 H8.5" stroke="#c4c4c4" stroke-width="1"/><rect x="5.2" y="0.6" width="1.5" height="3.2" fill="#c4c4c4"/><rect x="2.3" y="5.2" width="1.5" height="3.2" fill="#c4c4c4"/></svg>
<svg class="a" style="left:989.5px;top:78.0px;" width="3" height="9" viewBox="0 0 3 9"><rect x="0.8" y="0.3" width="1.4" height="1.9" fill="#c4c4c4"/><rect x="0.8" y="3.55" width="1.4" height="1.9" fill="#c4c4c4"/><rect x="0.8" y="6.8" width="1.4" height="1.9" fill="#c4c4c4"/></svg>
<div class="a t jp" data-w="16.8" id="jp9" style="left:810.2px;top:93.40px;font-size:9.35px;color:#c4c4c4;transform:scaleX(0.9333)">位置</div>
<div class="a t" style="left:869.5px;top:93.40px;font-size:8.5px;color:#c4c4c4;">X</div>
<div class="a" style="left:877.5px;top:93.4px;width:30.5px;height:11.8px;background:#2a2a2a;border-radius:2px;border:1px solid #212121"></div>
<div class="a t" style="left:880.5px;top:93.60px;font-size:9px;color:#c4c4c4;">0</div>
<div class="a t" style="left:914.5px;top:93.40px;font-size:8.5px;color:#c4c4c4;">Y</div>
<div class="a" style="left:922.4px;top:93.4px;width:30.6px;height:11.8px;background:#2a2a2a;border-radius:2px;border:1px solid #212121"></div>
<div class="a t" style="left:925.4px;top:93.60px;font-size:9px;color:#c4c4c4;">1.5</div>
<div class="a t" style="left:958px;top:93.40px;font-size:8.5px;color:#c4c4c4;">Z</div>
<div class="a" style="left:967px;top:93.4px;width:30px;height:11.8px;background:#2a2a2a;border-radius:2px;border:1px solid #212121"></div>
<div class="a t" style="left:970px;top:93.60px;font-size:9px;color:#c4c4c4;">2</div>
<div class="a t jp" data-w="16.8" id="jp10" style="left:810.2px;top:107.40px;font-size:9.35px;color:#c4c4c4;transform:scaleX(0.9333)">回転</div>
<div class="a t" style="left:869.5px;top:107.40px;font-size:8.5px;color:#c4c4c4;">X</div>
<div class="a" style="left:877.5px;top:107.4px;width:30.5px;height:11.8px;background:#2a2a2a;border-radius:2px;border:1px solid #212121"></div>
<div class="a t" style="left:880.5px;top:107.60px;font-size:9px;color:#c4c4c4;">0</div>
<div class="a t" style="left:914.5px;top:107.40px;font-size:8.5px;color:#c4c4c4;">Y</div>
<div class="a" style="left:922.4px;top:107.4px;width:30.6px;height:11.8px;background:#2a2a2a;border-radius:2px;border:1px solid #212121"></div>
<div class="a t" style="left:925.4px;top:107.60px;font-size:9px;color:#c4c4c4;">0</div>
<div class="a t" style="left:958px;top:107.40px;font-size:8.5px;color:#c4c4c4;">Z</div>
<div class="a" style="left:967px;top:107.4px;width:30px;height:11.8px;background:#2a2a2a;border-radius:2px;border:1px solid #212121"></div>
<div class="a t" style="left:970px;top:107.60px;font-size:9px;color:#c4c4c4;">0</div>
<div class="a t jp" data-w="26.5" id="jp11" style="left:810.2px;top:121.70px;font-size:9.35px;color:#c4c4c4;transform:scaleX(0.7361)">スケール</div>
<div class="a t" style="left:869.5px;top:121.70px;font-size:8.5px;color:#c4c4c4;">X</div>
<div class="a" style="left:877.5px;top:121.7px;width:30.5px;height:11.8px;background:#2a2a2a;border-radius:2px;border:1px solid #212121"></div>
<div class="a t" style="left:880.5px;top:121.90px;font-size:9px;color:#c4c4c4;">1</div>
<div class="a t" style="left:914.5px;top:121.70px;font-size:8.5px;color:#c4c4c4;">Y</div>
<div class="a" style="left:922.4px;top:121.7px;width:30.6px;height:11.8px;background:#2a2a2a;border-radius:2px;border:1px solid #212121"></div>
<div class="a t" style="left:925.4px;top:121.90px;font-size:9px;color:#c4c4c4;">1</div>
<div class="a t" style="left:958px;top:121.70px;font-size:8.5px;color:#c4c4c4;">Z</div>
<div class="a" style="left:967px;top:121.7px;width:30px;height:11.8px;background:#2a2a2a;border-radius:2px;border:1px solid #212121"></div>
<div class="a t" style="left:970px;top:121.90px;font-size:9px;color:#c4c4c4;">1</div>
<svg class="a" style="left:851px;top:123.5px;" width="10" height="8" viewBox="0 0 10 8"><path d="M3.5,1.5 H2.5 A2.5,2.5 0 0 0 2.5,6.5 H3.5 M6.5,1.5 H7.5 A2.5,2.5 0 0 1 7.5,6.5 H6.5" fill="none" stroke="#c4c4c4" stroke-width="1"/><path d="M1,0.5 L9,7.5" stroke="#c4c4c4" stroke-width="0.9"/></svg>
<div class="a" style="left:797px;top:139.5px;width:203px;height:1px;background:#242424;"></div>
<div class="a" style="left:797px;top:141px;width:203px;height:13.5px;background:#3e3e3e;"></div>
<div class="a" style="left:797px;top:154.5px;width:203px;height:1px;background:#1f1f1f;"></div>
<svg class="a" style="left:803px;top:144.95px;" width="4" height="5.6" viewBox="0 0 4 5.6"><polygon points="0,0 4,2.8 0,5.6" fill="#8a8a8a"/></svg>
<svg class="a" style="left:811.5px;top:143px;" width="9.5" height="9.5" viewBox="0 0 9.5 9.5"><rect x="0.5" y="0.5" width="8.5" height="8.5" fill="none" stroke="#70c8f0" stroke-width="0.9"/><path d="M3.3,0.5 V9 M6.2,0.5 V9 M0.5,3.3 H9 M0.5,6.2 H9" stroke="#70c8f0" stroke-width="0.8"/></svg>
<div class="a t" style="left:839.2px;top:142.05px;font-size:9.5px;color:#d2d2d2;font-weight:bold;">Sphere (Mesh Filter)</div>
<svg class="a" style="left:958.5px;top:143.25px;" width="9" height="9" viewBox="0 0 9 9"><circle cx="4.5" cy="4.5" r="4" fill="#c4c4c4"/><text x="4.5" y="7.4" text-anchor="middle" font-family="Liberation Sans" font-weight="bold" font-size="7" fill="#3e3e3e">?</text></svg>
<svg class="a" style="left:972.5px;top:143.25px;" width="9" height="9" viewBox="0 0 9 9"><path d="M0.5,2.6 H8.5 M0.5,6.4 H8.5" stroke="#c4c4c4" stroke-width="1"/><rect x="5.2" y="0.6" width="1.5" height="3.2" fill="#c4c4c4"/><rect x="2.3" y="5.2" width="1.5" height="3.2" fill="#c4c4c4"/></svg>
<svg class="a" style="left:989.5px;top:143.25px;" width="3" height="9" viewBox="0 0 3 9"><rect x="0.8" y="0.3" width="1.4" height="1.9" fill="#c4c4c4"/><rect x="0.8" y="3.55" width="1.4" height="1.9" fill="#c4c4c4"/><rect x="0.8" y="6.8" width="1.4" height="1.9" fill="#c4c4c4"/></svg>
<div class="a" style="left:797px;top:156px;width:203px;height:14px;background:#3e3e3e;"></div>
<div class="a" style="left:797px;top:170px;width:203px;height:1px;background:#1f1f1f;"></div>
<svg class="a" style="left:803px;top:160.2px;" width="4" height="5.6" viewBox="0 0 4 5.6"><polygon points="0,0 4,2.8 0,5.6" fill="#8a8a8a"/></svg>
<svg class="a" style="left:811.5px;top:158.5px;" width="10" height="10" viewBox="0 0 10 10"><rect x="0.5" y="0.5" width="8" height="8" fill="none" stroke="#70c8f0" stroke-width="0.9"/><path d="M3.2,0.5 V8.5 M5.9,0.5 V8.5 M0.5,3.2 H8.5 M0.5,5.9 H8.5" stroke="#70c8f0" stroke-width="0.8"/><ellipse cx="6.5" cy="7.8" rx="3.2" ry="2" fill="#3e3e3e" stroke="#e0e0e0" stroke-width="0.8"/><circle cx="6.5" cy="7.8" r="0.9" fill="#e0e0e0"/></svg>
<svg class="a" style="left:825.5px;top:158.4px;" width="9.2" height="9.2" viewBox="0 0 9.2 9.2"><rect x="0" y="0" width="9.2" height="9.2" rx="1.5" fill="#262626"/><path d="M2.024,4.784 L3.8639999999999994,6.624 L7.359999999999999,2.76" fill="none" stroke="#e6e6e6" stroke-width="1.2"/></svg>
<div class="a t" style="left:839.2px;top:157.30px;font-size:9.5px;color:#d2d2d2;font-weight:bold;">Mesh Renderer</div>
<svg class="a" style="left:958.5px;top:158.5px;" width="9" height="9" viewBox="0 0 9 9"><circle cx="4.5" cy="4.5" r="4" fill="#c4c4c4"/><text x="4.5" y="7.4" text-anchor="middle" font-family="Liberation Sans" font-weight="bold" font-size="7" fill="#3e3e3e">?</text></svg>
<svg class="a" style="left:972.5px;top:158.5px;" width="9" height="9" viewBox="0 0 9 9"><path d="M0.5,2.6 H8.5 M0.5,6.4 H8.5" stroke="#c4c4c4" stroke-width="1"/><rect x="5.2" y="0.6" width="1.5" height="3.2" fill="#c4c4c4"/><rect x="2.3" y="5.2" width="1.5" height="3.2" fill="#c4c4c4"/></svg>
<svg class="a" style="left:989.5px;top:158.5px;" width="3" height="9" viewBox="0 0 3 9"><rect x="0.8" y="0.3" width="1.4" height="1.9" fill="#c4c4c4"/><rect x="0.8" y="3.55" width="1.4" height="1.9" fill="#c4c4c4"/><rect x="0.8" y="6.8" width="1.4" height="1.9" fill="#c4c4c4"/></svg>
<div class="a" style="left:797px;top:171.5px;width:203px;height:14.0px;background:#3e3e3e;"></div>
<div class="a" style="left:797px;top:185.5px;width:203px;height:1px;background:#1f1f1f;"></div>
<svg class="a" style="left:803px;top:175.7px;" width="4" height="5.6" viewBox="0 0 4 5.6"><polygon points="0,0 4,2.8 0,5.6" fill="#8a8a8a"/></svg>
<svg class="a" style="left:811.5px;top:174px;" width="9.5" height="9.5" viewBox="0 0 9.5 9.5"><circle cx="4.75" cy="4.75" r="4.5" fill="#8cd840"/><path d="M0.5,4.75 H9" stroke="#3e3e3e" stroke-width="0.9"/></svg>
<svg class="a" style="left:825.5px;top:173.9px;" width="9.2" height="9.2" viewBox="0 0 9.2 9.2"><rect x="0" y="0" width="9.2" height="9.2" rx="1.5" fill="#262626"/><path d="M2.024,4.784 L3.8639999999999994,6.624 L7.359999999999999,2.76" fill="none" stroke="#e6e6e6" stroke-width="1.2"/></svg>
<div class="a t" style="left:839.2px;top:172.80px;font-size:9.5px;color:#d2d2d2;font-weight:bold;">Sphere Collider</div>
<svg class="a" style="left:958.5px;top:174.0px;" width="9" height="9" viewBox="0 0 9 9"><circle cx="4.5" cy="4.5" r="4" fill="#c4c4c4"/><text x="4.5" y="7.4" text-anchor="middle" font-family="Liberation Sans" font-weight="bold" font-size="7" fill="#3e3e3e">?</text></svg>
<svg class="a" style="left:972.5px;top:174.0px;" width="9" height="9" viewBox="0 0 9 9"><path d="M0.5,2.6 H8.5 M0.5,6.4 H8.5" stroke="#c4c4c4" stroke-width="1"/><rect x="5.2" y="0.6" width="1.5" height="3.2" fill="#c4c4c4"/><rect x="2.3" y="5.2" width="1.5" height="3.2" fill="#c4c4c4"/></svg>
<svg class="a" style="left:989.5px;top:174.0px;" width="3" height="9" viewBox="0 0 3 9"><rect x="0.8" y="0.3" width="1.4" height="1.9" fill="#c4c4c4"/><rect x="0.8" y="3.55" width="1.4" height="1.9" fill="#c4c4c4"/><rect x="0.8" y="6.8" width="1.4" height="1.9" fill="#c4c4c4"/></svg>
<div class="a" style="left:797px;top:187px;width:203px;height:13.5px;background:#3e3e3e;"></div>
<div class="a" style="left:797px;top:200.5px;width:203px;height:1px;background:#1f1f1f;"></div>
<svg class="a" style="left:802px;top:191.95px;" width="5.6" height="4" viewBox="0 0 5.6 4"><polygon points="0,0 5.6,0 2.8,4" fill="#8a8a8a"/></svg>
<svg class="a" style="left:812px;top:189px;" width="8.5" height="10" viewBox="0 0 8.5 10"><path d="M0.5,0.5 H5.5 L8,3 V9.5 H0.5 Z" fill="#f0f0f0"/><path d="M2.5,4 H6 M2.5,6 H6 M3.5,3 V7.5 M5,3 V7.5" stroke="#2a9a4a" stroke-width="0.9"/></svg>
<div class="a t" style="left:839.2px;top:188.05px;font-size:9.5px;color:#d2d2d2;font-weight:bold;">Item (</div>
<div class="a t jp" data-w="35.5" id="jp12" style="left:865.5px;top:188.05px;font-size:9.68px;color:#d2d2d2;font-weight:bold;transform:scaleX(0.7100)">スクリプト</div>
<div class="a t" style="left:901.3px;top:188.05px;font-size:9.5px;color:#d2d2d2;font-weight:bold;">)</div>
<svg class="a" style="left:958.5px;top:189.25px;" width="9" height="9" viewBox="0 0 9 9"><circle cx="4.5" cy="4.5" r="4" fill="#c4c4c4"/><text x="4.5" y="7.4" text-anchor="middle" font-family="Liberation Sans" font-weight="bold" font-size="7" fill="#3e3e3e">?</text></svg>
<svg class="a" style="left:972.5px;top:189.25px;" width="9" height="9" viewBox="0 0 9 9"><path d="M0.5,2.6 H8.5 M0.5,6.4 H8.5" stroke="#c4c4c4" stroke-width="1"/><rect x="5.2" y="0.6" width="1.5" height="3.2" fill="#c4c4c4"/><rect x="2.3" y="5.2" width="1.5" height="3.2" fill="#c4c4c4"/></svg>
<svg class="a" style="left:989.5px;top:189.25px;" width="3" height="9" viewBox="0 0 3 9"><rect x="0.8" y="0.3" width="1.4" height="1.9" fill="#c4c4c4"/><rect x="0.8" y="3.55" width="1.4" height="1.9" fill="#c4c4c4"/><rect x="0.8" y="6.8" width="1.4" height="1.9" fill="#c4c4c4"/></svg>
<div class="a t" style="left:810px;top:204.20px;font-size:8.5px;color:#c4c4c4;">Id</div>
<div class="a" style="left:916px;top:204.5px;width:81px;height:11.3px;background:#2a2a2a;border-radius:2px;border:1px solid #212121"></div>
<div class="a t" style="left:919px;top:204.50px;font-size:9px;color:#c4c4c4;">0</div>
<div class="a t jp" data-w="24.5" id="jp13" style="left:810.6px;top:218.20px;font-size:9.35px;color:#c4c4c4;transform:scaleX(0.9074)">項目名</div>
<div class="a" style="left:895px;top:218px;width:102px;height:11.6px;background:#2a2a2a;border-radius:2px;border:1px solid #212121"></div>
<div class="a t jp" data-w="19.4" id="jp14" style="left:810.6px;top:232.40px;font-size:9.35px;color:#c4c4c4;transform:scaleX(0.7185)">サイズ</div>
<div class="a t" style="left:898.5px;top:231.80px;font-size:8.5px;color:#c4c4c4;">X</div>
<div class="a" style="left:905.7px;top:231.6px;width:23.4px;height:12px;background:#2a2a2a;border-radius:2px;border:1px solid #212121"></div>
<div class="a t" style="left:908.7px;top:232.00px;font-size:9px;color:#c4c4c4;">0</div>
<div class="a t" style="left:934.5px;top:231.80px;font-size:8.5px;color:#c4c4c4;">Y</div>
<div class="a" style="left:942px;top:231.6px;width:20.8px;height:12px;background:#2a2a2a;border-radius:2px;border:1px solid #212121"></div>
<div class="a t" style="left:945px;top:232.00px;font-size:9px;color:#c4c4c4;">0</div>
<div class="a t" style="left:968px;top:231.80px;font-size:8.5px;color:#c4c4c4;">Z</div>
<div class="a" style="left:976px;top:231.6px;width:21px;height:12px;background:#2a2a2a;border-radius:2px;border:1px solid #212121"></div>
<div class="a t" style="left:979px;top:232.00px;font-size:9px;color:#c4c4c4;">0</div>
<div class="a" style="left:810px;top:246.3px;width:183px;height:12.7px;background:#585858;border-radius:2px"></div>
<div class="a t jp" data-w="80.6" id="jp15" style="left:861.2px;top:246.60px;font-size:9.35px;color:#d0d0d0;transform:scaleX(0.7463)">デフォルトのサイズに変更</div>
<div class="a" style="left:797px;top:262.5px;width:203px;height:1px;background:#242424;"></div>
<div class="a" style="left:797px;top:266px;width:203px;height:14px;background:#3e3e3e;"></div>
<div class="a" style="left:797px;top:280px;width:203px;height:1px;background:#1f1f1f;"></div>
<svg class="a" style="left:802px;top:271.2px;" width="5.6" height="4" viewBox="0 0 5.6 4"><polygon points="0,0 5.6,0 2.8,4" fill="#8a8a8a"/></svg>
<svg class="a" style="left:812px;top:268px;" width="8.5" height="10" viewBox="0 0 8.5 10"><path d="M0.5,0.5 H5.5 L8,3 V9.5 H0.5 Z" fill="#f0f0f0"/><path d="M2.5,4 H6 M2.5,6 H6 M3.5,3 V7.5 M5,3 V7.5" stroke="#2a9a4a" stroke-width="0.9"/></svg>
<div class="a t" style="left:839.2px;top:267.30px;font-size:9.5px;color:#d2d2d2;font-weight:bold;">Scriptable Item (</div>
<div class="a t jp" data-w="32" id="jp16" style="left:914px;top:267.30px;font-size:9.68px;color:#d2d2d2;font-weight:bold;transform:scaleX(0.6400)">スクリプト</div>
<div class="a t" style="left:946.3px;top:267.30px;font-size:9.5px;color:#d2d2d2;font-weight:bold;">)</div>
<svg class="a" style="left:958.5px;top:268.5px;" width="9" height="9" viewBox="0 0 9 9"><circle cx="4.5" cy="4.5" r="4" fill="#c4c4c4"/><text x="4.5" y="7.4" text-anchor="middle" font-family="Liberation Sans" font-weight="bold" font-size="7" fill="#3e3e3e">?</text></svg>
<svg class="a" style="left:972.5px;top:268.5px;" width="9" height="9" viewBox="0 0 9 9"><path d="M0.5,2.6 H8.5 M0.5,6.4 H8.5" stroke="#c4c4c4" stroke-width="1"/><rect x="5.2" y="0.6" width="1.5" height="3.2" fill="#c4c4c4"/><rect x="2.3" y="5.2" width="1.5" height="3.2" fill="#c4c4c4"/></svg>
<svg class="a" style="left:989.5px;top:268.5px;" width="3" height="9" viewBox="0 0 3 9"><rect x="0.8" y="0.3" width="1.4" height="1.9" fill="#c4c4c4"/><rect x="0.8" y="3.55" width="1.4" height="1.9" fill="#c4c4c4"/><rect x="0.8" y="6.8" width="1.4" height="1.9" fill="#c4c4c4"/></svg>
<div class="a t" style="left:810px;top:283.40px;font-size:8.9px;color:#7aa6e6;">Source Code Asset</div>
<div class="a" style="left:895.5px;top:282.8px;width:101.5px;height:12.9px;background:#2a2a2a;border-radius:2px;border:1px solid #3d6fae"></div>
<svg class="a" style="left:897.5px;top:284.5px;" width="10" height="10" viewBox="0 0 10 10"><circle cx="4" cy="4" r="3" fill="none" stroke="#8ab0c8" stroke-width="1"/><circle cx="4" cy="4" r="1" fill="#8ab0c8"/><path d="M5,6.5 Q7,5.5 7.5,8 L6.2,9.5 Z" fill="#e05030"/></svg>
<div class="a t" style="left:906.5px;top:283.50px;font-size:9px;color:#d0d0d0;">greet (Java Script A</div>
<div class="a" style="left:983.5px;top:283.8px;width:12.5px;height:10.9px;background:#2a2a2a;"></div>
<svg class="a" style="left:985px;top:285px;" width="9" height="9" viewBox="0 0 9 9"><circle cx="4.5" cy="4.5" r="3.6" fill="none" stroke="#c4c4c4" stroke-width="0.9"/><circle cx="4.5" cy="4.5" r="1.3" fill="#c4c4c4"/></svg>
<div class="a" style="left:797px;top:299.5px;width:203px;height:1px;background:#242424;"></div>
<div class="a" style="left:797px;top:300.5px;width:203px;height:38px;background:#3e3e3e;"></div>
<svg class="a" style="left:807.5px;top:304.5px;" width="23" height="23" viewBox="0 0 23 23"><defs><radialGradient id="mball" cx="0.4" cy="0.35" r="0.7"><stop offset="0" stop-color="#d8d8d8"/><stop offset="0.6" stop-color="#9a9a9a"/><stop offset="1" stop-color="#4a4a4a"/></radialGradient></defs><circle cx="11.5" cy="11.5" r="11" fill="url(#mball)"/></svg>
<svg class="a" style="left:803px;top:327.5px;" width="4" height="5.6" viewBox="0 0 4 5.6"><polygon points="0,0 4,2.8 0,5.6" fill="#7a7a7a"/></svg>
<div class="a t" style="left:836px;top:304.20px;font-size:9.4px;color:#a8a8a8;">Default-Material (Material)</div>
<svg class="a" style="left:979.5px;top:305.8px;" width="9" height="9" viewBox="0 0 9 9"><circle cx="4.5" cy="4.5" r="4" fill="#c4c4c4"/><text x="4.5" y="7.4" text-anchor="middle" font-family="Liberation Sans" font-weight="bold" font-size="7" fill="#3e3e3e">?</text></svg>
<svg class="a" style="left:992px;top:306px;" width="3" height="9" viewBox="0 0 3 9"><rect x="0.8" y="0.3" width="1.4" height="1.9" fill="#c4c4c4"/><rect x="0.8" y="3.55" width="1.4" height="1.9" fill="#c4c4c4"/><rect x="0.8" y="6.8" width="1.4" height="1.9" fill="#c4c4c4"/></svg>
<div class="a t" style="left:834px;top:320.80px;font-size:8.9px;color:#8a8a8a;">Shader</div>
<div class="a" style="left:870.5px;top:320.8px;width:90.5px;height:11.6px;background:#464646;border-radius:2px"></div>
<div class="a t" style="left:873.5px;top:320.80px;font-size:9px;color:#8e8e8e;">Standard</div>
<svg class="a" style="left:951.5px;top:325.5px;" width="5" height="3" viewBox="0 0 5 3"><polygon points="0,0 5,0 2.5,3" fill="#8e8e8e"/></svg>
<div class="a" style="left:964.3px;top:320.8px;width:32.7px;height:11.6px;background:#464646;border-radius:2px"></div>
<div class="a t" style="left:968px;top:320.80px;font-size:8.9px;color:#8e8e8e;">Edit...</div>
<div class="a" style="left:797px;top:338.5px;width:203px;height:1px;background:#242424;"></div>
<div class="a" style="left:797px;top:345px;width:203px;height:1px;background:#2a2a2a;"></div>
<div class="a" style="left:819px;top:353.5px;width:160px;height:14.7px;background:#585858;border-radius:2px"></div>
<div class="a t jp" data-w="68.3" id="jp17" style="left:863.3px;top:355.00px;font-size:9.35px;color:#d0d0d0;transform:scaleX(0.7589)">コンポーネントを追加</div>
<div class="a" style="left:0px;top:545.5px;width:796px;height:13.5px;background:#282828;"></div>
<div class="a" style="left:0px;top:545.5px;width:62px;height:13.5px;background:#3c3c3c;"></div>
<svg class="a" style="left:2.5px;top:548.5px;" width="9" height="7.5" viewBox="0 0 9 7.5"><path d="M0.5,0.8 H4 L5,2 H9.5 V7.5 H0.5 Z" fill="#c8c8c8"/></svg>
<div class="a t jp" data-w="36" id="jp18" style="left:13.5px;top:546.40px;font-size:9.35px;color:#c4c4c4;transform:scaleX(0.6667)">プロジェクト</div>
<svg class="a" style="left:68px;top:548px;" width="8" height="9" viewBox="0 0 8 9"><rect x="0.5" y="0.5" width="7" height="8" rx="0.8" fill="#c8c8c8"/><path d="M2,2.5 H6 M2,4.5 H5 M2,6.5 H6" stroke="#282828" stroke-width="0.8"/></svg>
<div class="a t jp" data-w="31.4" id="jp19" style="left:79.6px;top:546.40px;font-size:9.35px;color:#c4c4c4;transform:scaleX(0.6978)">コンソール</div>
<svg class="a" style="left:770.5px;top:547.8px;" width="8" height="9" viewBox="0 0 8 9"><path d="M1.8,4.5 V3.2 A2.2,2.2 0 0 1 6.2,3.2 V4.2" fill="none" stroke="#c4c4c4" stroke-width="1"/><rect x="1" y="4.8" width="6" height="3.7" rx="1" fill="none" stroke="#c4c4c4" stroke-width="1"/></svg>
<svg class="a" style="left:785.5px;top:548px;" width="3" height="9" viewBox="0 0 3 9"><rect x="0.8" y="0.3" width="1.4" height="1.9" fill="#c4c4c4"/><rect x="0.8" y="3.55" width="1.4" height="1.9" fill="#c4c4c4"/><rect x="0.8" y="6.8" width="1.4" height="1.9" fill="#c4c4c4"/></svg>
<div class="a" style="left:0px;top:559px;width:796px;height:14.5px;background:#3c3c3c;"></div>
<svg class="a" style="left:2.5px;top:561.5px;" width="9" height="9" viewBox="0 0 9 9"><path d="M4.5,0.5 V8.5 M0.5,4.5 H8.5" stroke="#d0d0d0" stroke-width="1.5"/></svg>
<svg class="a" style="left:14px;top:564.5px;" width="5" height="3" viewBox="0 0 5 3"><polygon points="0,0 5,0 2.5,3" fill="#c4c4c4"/></svg>
<div class="a" style="left:493px;top:561px;width:209px;height:11px;background:#2a2a2a;border-radius:2px;border:1px solid #232323"></div>
<svg class="a" style="left:497px;top:563.5px;" width="6" height="6" viewBox="0 0 6 6"><circle cx="2.3" cy="2.3" r="1.7" fill="none" stroke="#c4c4c4" stroke-width="1"/><path d="M3.5,3.5 L5.5,5.5" stroke="#c4c4c4" stroke-width="1.1"/></svg>
<svg class="a" style="left:704.5px;top:561.2px;" width="10" height="10" viewBox="0 0 10 10"><rect x="2.5" y="0.8" width="6.7" height="6.7" rx="0.8" fill="none" stroke="#c4c4c4" stroke-width="0.9"/><path d="M4.5,5.2 L7.5,2.2 M5.5,2 H7.6 V4" stroke="#c4c4c4" stroke-width="0.9" fill="none"/><circle cx="2.6" cy="7.6" r="1.9" fill="#3c3c3c" stroke="#c4c4c4" stroke-width="0.9"/></svg>
<div class="a" style="left:718.5px;top:559.5px;width:18px;height:13.5px;background:#424242;"></div>
<div class="a" style="left:737px;top:559.5px;width:18px;height:13.5px;background:#424242;"></div>
<div class="a" style="left:755.5px;top:559.5px;width:18px;height:13.5px;background:#424242;"></div>
<div class="a" style="left:774.5px;top:559.5px;width:18px;height:13.5px;background:#424242;"></div>
<svg class="a" style="left:722px;top:561px;" width="10" height="10" viewBox="0 0 10 10"><rect x="3.5" y="0.5" width="4" height="4" fill="#c4c4c4"/><circle cx="4" cy="7" r="2.6" fill="#c4c4c4"/><polygon points="6.5,5 9.5,9.5 5.5,9.5" fill="#c4c4c4"/></svg>
<svg class="a" style="left:741px;top:561.5px;" width="10" height="9" viewBox="0 0 10 9"><path d="M4.5,0.5 H9 V5 L4.5,9 L0.5,5 Z" fill="#c4c4c4" transform="rotate(0)"/><circle cx="7" cy="2.5" r="0.9" fill="#424242"/></svg>
<svg class="a" style="left:759.5px;top:561.5px;" width="10" height="9" viewBox="0 0 10 9"><polygon points="5,0.3 6.3,3.4 9.6,3.5 7,5.6 7.9,8.8 5,7 2.1,8.8 3,5.6 0.4,3.5 3.7,3.4" fill="#8a8a8a"/></svg>
<svg class="a" style="left:776.5px;top:562px;" width="11" height="8" viewBox="0 0 11 8"><path d="M0.8,4 Q5,-0.5 9.2,4 Q5,8.5 0.8,4 Z" fill="none" stroke="#c4c4c4" stroke-width="0.9"/><circle cx="5" cy="4" r="1.4" fill="#c4c4c4"/><path d="M1.5,7.5 L8.5,0.5" stroke="#c4c4c4" stroke-width="0.9"/></svg>
<div class="a t" style="left:787px;top:560.30px;font-size:9px;color:#c4c4c4;">5</div>
<div class="a" style="left:0px;top:572.5px;width:796px;height:1px;background:#2c2c2c;"></div>
<div class="a" style="left:0px;top:573.5px;width:78.5px;height:96.5px;background:#383838;"></div>
<div class="a" style="left:0px;top:650.5px;width:70px;height:11px;background:#4d4d4d;"></div>
<svg class="a" style="left:2.5px;top:576.7px;" width="4" height="5.6" viewBox="0 0 4 5.6"><polygon points="0,0 4,2.8 0,5.6" fill="#8a8a8a"/></svg>
<svg class="a" style="left:10.5px;top:575.0px;" width="9" height="9" viewBox="0 0 9 9"><polygon points="4.5,0.3 5.6,3.3 8.8,3.4 6.3,5.4 7.2,8.6 4.5,6.8 1.8,8.6 2.7,5.4 0.2,3.4 3.4,3.3" fill="#d0d0d0"/></svg>
<div class="a t" style="left:23px;top:573.70px;font-size:9.4px;color:#d0d0d0;font-weight:bold;overflow:hidden;max-width:47px">Favorites</div>
<svg class="a" style="left:2px;top:599.2px;" width="5.6" height="4" viewBox="0 0 5.6 4"><polygon points="0,0 5.6,0 2.8,4" fill="#8a8a8a"/></svg>
<svg class="a" style="left:10.5px;top:597.2px;" width="10" height="8" viewBox="0 0 10 8"><path d="M0.5,1 H4 L5,2 H8.5 V3.2 H2.2 L0.5,7.5 Z" fill="#c8c8c8"/><path d="M2.2,3.8 H9.6 L8,7.5 H0.8 Z" fill="#c8c8c8"/></svg>
<div class="a t" style="left:23px;top:595.20px;font-size:9.4px;color:#d0d0d0;font-weight:bold;overflow:hidden;max-width:47px">Assets</div>
<svg class="a" style="left:12px;top:610.4000000000001px;" width="5.6" height="4" viewBox="0 0 5.6 4"><polygon points="0,0 5.6,0 2.8,4" fill="#8a8a8a"/></svg>
<svg class="a" style="left:20.5px;top:608.4000000000001px;" width="10" height="8" viewBox="0 0 10 8"><path d="M0.5,1 H4 L5,2 H8.5 V3.2 H2.2 L0.5,7.5 Z" fill="#c8c8c8"/><path d="M2.2,3.8 H9.6 L8,7.5 H0.8 Z" fill="#c8c8c8"/></svg>
<div class="a t" style="left:33px;top:606.40px;font-size:9.2px;color:#c4c4c4;overflow:hidden;max-width:37px">ClusterVR</div>
<svg class="a" style="left:22.5px;top:620.5px;" width="4" height="5.6" viewBox="0 0 4 5.6"><polygon points="0,0 4,2.8 0,5.6" fill="#8a8a8a"/></svg>
<svg class="a" style="left:30.5px;top:619.5px;" width="10" height="8" viewBox="0 0 10 8"><path d="M0.5,0.8 H4 L5,2 H9.5 V7.5 H0.5 Z" fill="#c8c8c8"/></svg>
<div class="a t" style="left:43px;top:617.50px;font-size:9.2px;color:#c4c4c4;overflow:hidden;max-width:27px">Scenes</div>
<svg class="a" style="left:22.5px;top:631.6px;" width="4" height="5.6" viewBox="0 0 4 5.6"><polygon points="0,0 4,2.8 0,5.6" fill="#8a8a8a"/></svg>
<svg class="a" style="left:30.5px;top:630.6px;" width="10" height="8" viewBox="0 0 10 8"><path d="M0.5,0.8 H4 L5,2 H9.5 V7.5 H0.5 Z" fill="#c8c8c8"/></svg>
<div class="a t" style="left:43px;top:628.60px;font-size:9.2px;color:#c4c4c4;overflow:hidden;max-width:27px">StaticF</div>
<svg class="a" style="left:22px;top:643.7px;" width="5.6" height="4" viewBox="0 0 5.6 4"><polygon points="0,0 5.6,0 2.8,4" fill="#8a8a8a"/></svg>
<svg class="a" style="left:30.5px;top:641.7px;" width="10" height="8" viewBox="0 0 10 8"><path d="M0.5,1 H4 L5,2 H8.5 V3.2 H2.2 L0.5,7.5 Z" fill="#c8c8c8"/><path d="M2.2,3.8 H9.6 L8,7.5 H0.8 Z" fill="#c8c8c8"/></svg>
<div class="a t" style="left:43px;top:639.70px;font-size:9.2px;color:#c4c4c4;overflow:hidden;max-width:27px">World</div>
<svg class="a" style="left:40.5px;top:652.7px;" width="10" height="8" viewBox="0 0 10 8"><path d="M0.5,0.8 H4 L5,2 H9.5 V7.5 H0.5 Z" fill="#c8c8c8"/></svg>
<div class="a t" style="left:53px;top:650.70px;font-size:9.2px;color:#c4c4c4;overflow:hidden;max-width:17px">script</div>
<svg class="a" style="left:2.5px;top:665.0px;" width="4" height="5.6" viewBox="0 0 4 5.6"><polygon points="0,0 4,2.8 0,5.6" fill="#8a8a8a"/></svg>
<svg class="a" style="left:10.5px;top:664.0px;" width="10" height="8" viewBox="0 0 10 8"><path d="M0.5,0.8 H4 L5,2 H9.5 V7.5 H0.5 Z" fill="#c8c8c8"/></svg>
<div class="a t" style="left:23px;top:662.00px;font-size:9.4px;color:#d0d0d0;font-weight:bold;overflow:hidden;max-width:47px">Packages</div>
<svg class="a" style="left:28.5px;top:651px;" width="44" height="11" viewBox="0 0 44 11"><rect x="0.6" y="0.6" width="48" height="9.8" rx="4.5" fill="none" stroke="#c8c04a" stroke-width="1.1"/></svg>
<div class="a" style="left:70.5px;top:573.5px;width:8px;height:96.5px;background:#383838;"></div>
<svg class="a" style="left:72px;top:577.5px;" width="5" height="3" viewBox="0 0 5 3"><polygon points="0,3 5,3 2.5,0" fill="#c4c4c4"/></svg>
<div class="a" style="left:71.5px;top:586px;width:6px;height:77px;background:#5c5c5c;border-radius:3px"></div>
<svg class="a" style="left:72px;top:666px;" width="5" height="3" viewBox="0 0 5 3"><polygon points="0,0 5,0 2.5,3" fill="#c4c4c4"/></svg>
<div class="a" style="left:78.5px;top:573.5px;width:1px;height:96.5px;background:#232323;"></div>
<div class="a" style="left:79.5px;top:573.5px;width:716.5px;height:13.8px;background:#3e3e3e;"></div>
<div class="a t" style="left:81.5px;top:574.30px;font-size:9px;color:#b0b0b0;">Assets</div>
<div class="a t" style="left:113.5px;top:574.30px;font-size:9px;color:#8a8a8a;">&gt;</div>
<div class="a t" style="left:121.3px;top:574.30px;font-size:9px;color:#b0b0b0;">ClusterVR</div>
<div class="a t" style="left:165.8px;top:574.30px;font-size:9px;color:#8a8a8a;">&gt;</div>
<div class="a t" style="left:174px;top:574.30px;font-size:9px;color:#b0b0b0;">World</div>
<div class="a t" style="left:202.2px;top:574.30px;font-size:9px;color:#8a8a8a;">&gt;</div>
<div class="a t" style="left:210.5px;top:574.30px;font-size:9.5px;color:#d8d8d8;font-weight:bold;">script</div>
<div class="a" style="left:79.5px;top:587.3px;width:716.5px;height:70px;background:#333333;"></div>
<div class="a" style="left:79.5px;top:587px;width:716.5px;height:0.8px;background:#2a2a2a;"></div>
<svg class="a" style="left:94.5px;top:598px;" width="42" height="40" viewBox="0 0 42 40"><path d="M16,2 L29.5,9.5 V25.5 L16,33 L2.5,25.5 V9.5 Z M2.5,9.5 L16,17 L29.5,9.5 M16,17 V33" fill="none" stroke="#5ec8f0" stroke-width="2.6" stroke-linejoin="round"/><rect x="18" y="19" width="22" height="20" fill="#333333"/><path d="M25.5,20.5 H24.5 Q22.5,20.5 22.5,22.5 V26.5 Q22.5,28.8 20.3,28.8 Q22.5,28.8 22.5,31.1 V35.5 Q22.5,37.5 24.5,37.5 H25.5 M31.5,20.5 H32.5 Q34.5,20.5 34.5,22.5 V26.5 Q34.5,28.8 36.7,28.8 Q34.5,28.8 34.5,31.1 V35.5 Q34.5,37.5 32.5,37.5 H31.5" fill="none" stroke="#f06a3a" stroke-width="2.6" stroke-linejoin="round"/></svg>
<svg class="a" style="left:98.5px;top:641.5px;" width="28" height="11" viewBox="0 0 28 11"><rect x="0.6" y="0.6" width="26.8" height="9.8" rx="4.9" fill="#2a2a2a" stroke="#c8c04a" stroke-width="1.1"/></svg>
<div class="a t" style="left:104.5px;top:640.80px;font-size:8.5px;color:#d0d0d0;">greet</div>
<svg class="a" style="left:789px;top:592px;" width="5" height="3" viewBox="0 0 5 3"><polygon points="0,3 5,3 2.5,0" fill="#c4c4c4"/></svg>
<div class="a" style="left:788.5px;top:599px;width:6.5px;height:46px;background:#5c5c5c;border-radius:3px"></div>
<svg class="a" style="left:789px;top:650px;" width="5" height="3" viewBox="0 0 5 3"><polygon points="0,0 5,0 2.5,3" fill="#c4c4c4"/></svg>
<div class="a" style="left:79.5px;top:657.3px;width:716.5px;height:12.7px;background:#3e3e3e;"></div>
<div class="a" style="left:746px;top:662.8px;width:38px;height:1px;background:#8a8a8a;"></div>
<svg class="a" style="left:763px;top:659.5px;" width="8" height="8" viewBox="0 0 8 8"><circle cx="4" cy="4" r="3.3" fill="#b8b8b8"/></svg>
<div class="a" style="left:0px;top:670px;width:1000px;height:16px;background:#1b1b1b;"></div>
<svg class="a" style="left:0.5px;top:672.5px;" width="11" height="11" viewBox="0 0 11 11"><circle cx="5.2" cy="5.2" r="4.6" fill="#e0e0e0"/><path d="M6.5,9 L9.5,10.5 L8.5,7.5 Z" fill="#e0e0e0"/><rect x="4.5" y="2" width="1.5" height="4" fill="#1b1b1b"/><rect x="4.5" y="7" width="1.5" height="1.4" fill="#1b1b1b"/></svg>
<div class="a t" style="left:12.5px;top:672.30px;font-size:8.8px;color:#c4c4c4;">package</div>
<div class="a t jp" data-w="91.7" id="jp20" style="left:42.5px;top:672.30px;font-size:9.35px;color:#c4c4c4;transform:scaleX(0.8491)">一覧の取得に成功しました</div>
<div class="a" style="left:926.5px;top:671px;width:0.8px;height:15px;background:#262626;"></div>
<div class="a" style="left:944px;top:671px;width:0.8px;height:15px;background:#262626;"></div>
<div class="a" style="left:961.5px;top:671px;width:0.8px;height:15px;background:#262626;"></div>
<svg class="a" style="left:931px;top:673px;" width="10" height="10" viewBox="0 0 10 10"><ellipse cx="5" cy="5.5" rx="3" ry="3.8" fill="#d8d8d8"/><path d="M0.5,2 L2.5,3.5 M9.5,2 L7.5,3.5 M0.5,6 H2 M9.5,6 H8 M0.5,9.5 L2.5,8 M9.5,9.5 L7.5,8" stroke="#d8d8d8" stroke-width="0.9"/><path d="M1,0.5 L9.5,9.5" stroke="#1b1b1b" stroke-width="1.3"/></svg>
<svg class="a" style="left:949px;top:673px;" width="10" height="10" viewBox="0 0 10 10"><ellipse cx="5" cy="2" rx="3.8" ry="1.6" fill="#d8d8d8"/><path d="M1.2,3.2 V8 Q5,10.2 8.8,8 V3.2 Q5,5.4 1.2,3.2 Z" fill="#d8d8d8"/><path d="M1.2,5.5 Q5,7.7 8.8,5.5" stroke="#1b1b1b" stroke-width="0.8" fill="none"/><path d="M4,6 L9.5,10" stroke="#1b1b1b" stroke-width="1.2"/></svg>
<svg class="a" style="left:966.5px;top:672.5px;" width="11" height="11" viewBox="0 0 11 11"><circle cx="5.5" cy="5.5" r="3.8" fill="none" stroke="#d8d8d8" stroke-width="1"/><path d="M5.5,0.5 V3 M5.5,8 V10.5" stroke="#d8d8d8" stroke-width="1"/><circle cx="5.5" cy="5.5" r="1.5" fill="#d8d8d8"/><path d="M1,1 L10,10" stroke="#d8d8d8" stroke-width="1"/></svg>
<svg class="a" style="left:984.5px;top:672.5px;" width="11" height="11" viewBox="0 0 11 11"><circle cx="5.5" cy="5.5" r="4.8" fill="none" stroke="#d8d8d8" stroke-width="1"/><path d="M3,5.7 L4.8,7.4 L8,3.8" fill="none" stroke="#d8d8d8" stroke-width="1.1"/></svg><script>document.querySelectorAll('.jp').forEach(function(e){e.style.transform='none';var n=e.getBoundingClientRect().width;if(n>0)e.style.transform='scaleX('+(parseFloat(e.dataset.w)/n)+')';});</script></body></html>
